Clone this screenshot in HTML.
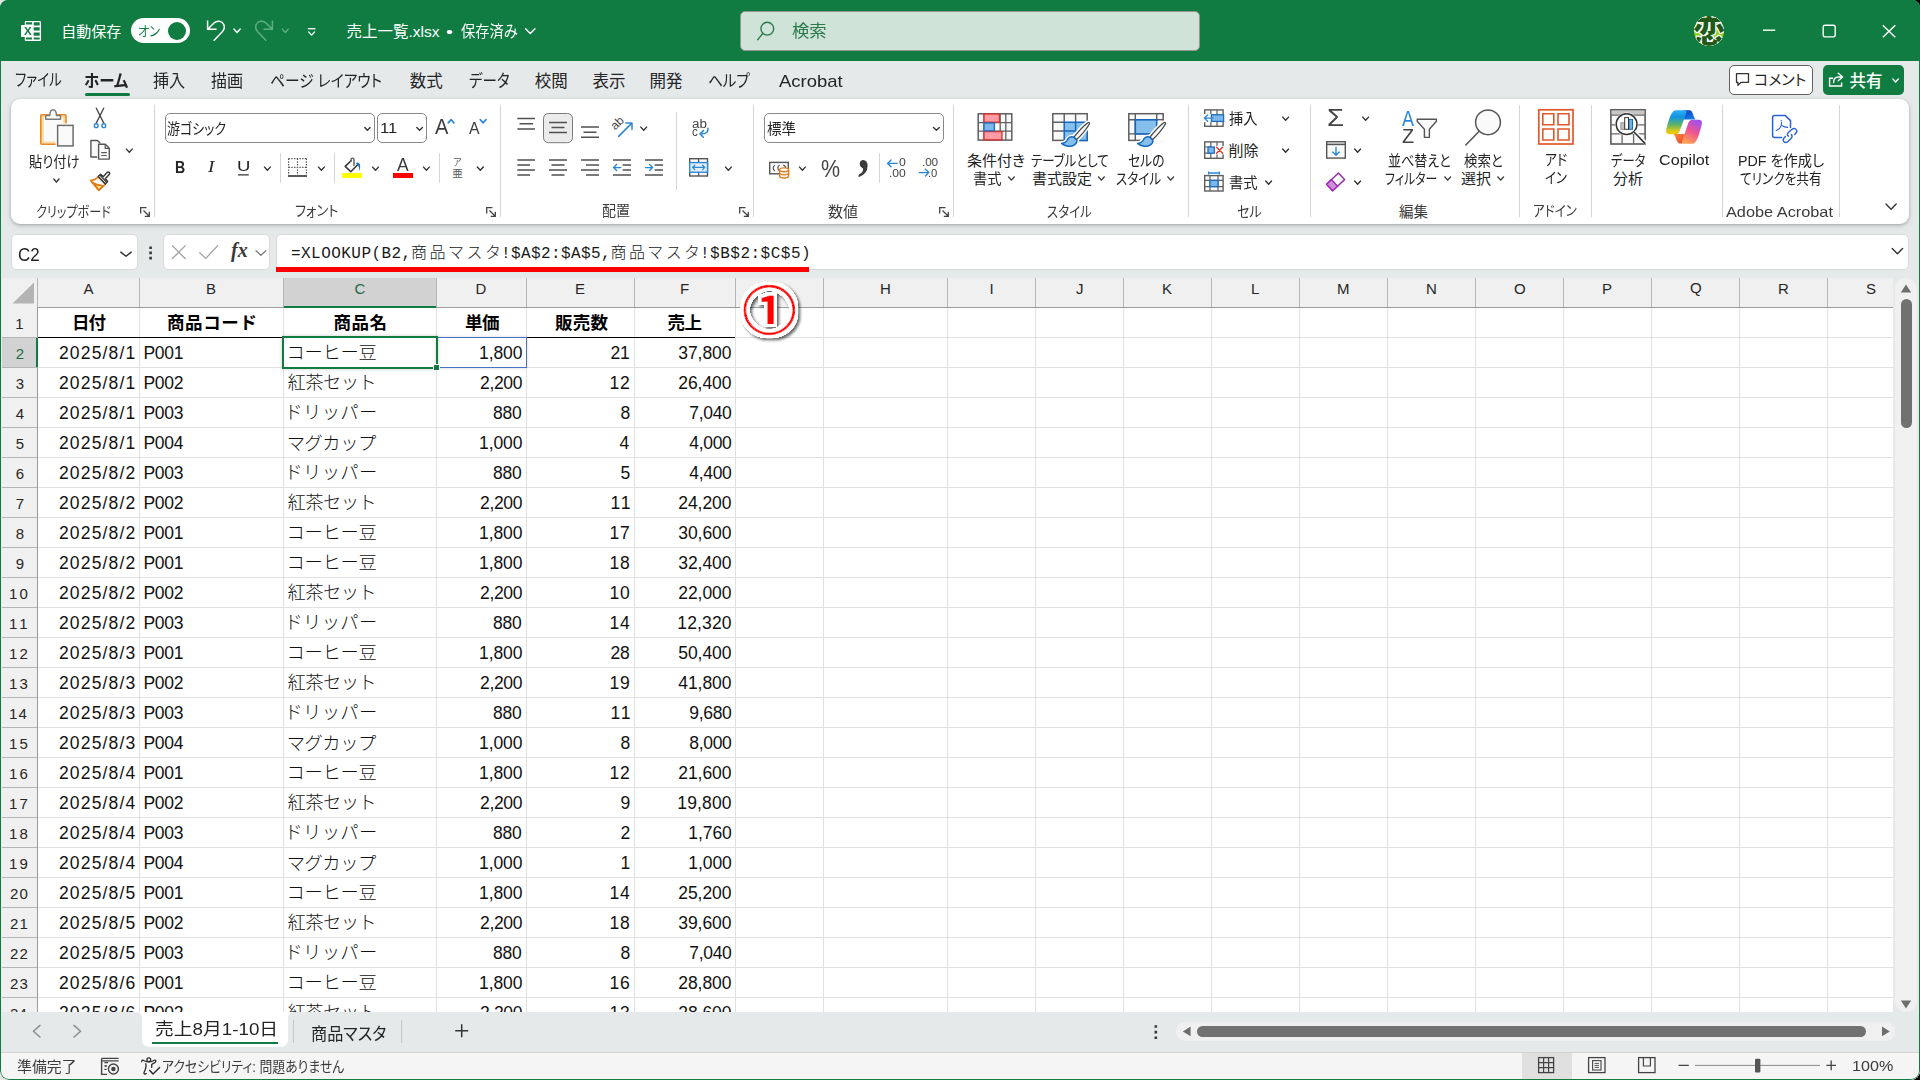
<!DOCTYPE html>
<html lang="ja"><head><meta charset="utf-8"><title>売上一覧.xlsx - Excel</title>
<style>
*{box-sizing:border-box;margin:0;padding:0}
html,body{width:1920px;height:1080px;overflow:hidden;background:linear-gradient(90deg,#E4E4E4 50%,#000 50%);font-family:"Liberation Sans","Noto Sans CJK JP",sans-serif;}
#win{position:absolute;left:0;top:0;width:1920px;height:1080px;overflow:hidden;background:#E5E9EA;border-radius:8px 8px 9px 9px;}
#frame{position:absolute;left:0;top:0;width:1920px;height:1080px;border:1px solid #107C41;border-left-width:1.3px;border-radius:8px 8px 9px 9px;}
.abs{position:absolute}
.t{position:absolute;white-space:pre;line-height:40px;height:40px;transform-origin:0 50%;}
#title{position:absolute;left:0;top:0;width:1920px;height:61px;background:#107C41;}
#search{position:absolute;left:740px;top:11px;width:460px;height:40px;background:#CFE3D8;border:1px solid #979393;border-radius:5px;}
#toggle{position:absolute;left:131px;top:18px;width:59px;height:25px;border-radius:13px;background:#fff;}
#knob{position:absolute;left:168px;top:22px;width:18px;height:18px;border-radius:9px;background:#107C41;}
#avatar{position:absolute;left:1694px;top:16px;width:30px;height:30px;border-radius:15px;background:#8FD11E;overflow:hidden;}
#homeul{position:absolute;left:85px;top:93px;width:45px;height:3px;border-radius:1.5px;background:#107C41;}
#cmt{position:absolute;left:1729px;top:65px;width:84px;height:30px;border:1px solid #616161;border-radius:5px;background:#fff;}
#share{position:absolute;left:1823px;top:65px;width:81px;height:30px;border-radius:5px;background:#107C41;}
#ribbon{position:absolute;left:11px;top:99px;width:1898px;height:125px;background:#fff;border-radius:9px;box-shadow:0 1px 3px rgba(0,0,0,.22),0 2px 6px rgba(0,0,0,.10);}
.vsep{position:absolute;width:1px;background:#D4D4D4;}
.box{position:absolute;border:1px solid #8A8A8A;border-radius:5px;background:#fff;}
.fbox{position:absolute;top:234px;height:36px;background:#fff;border:1px solid #D9D9D9;border-radius:5px;}
#grid{position:absolute;left:2px;top:278px;width:1891px;height:734px;background:#fff;overflow:hidden;}
#colhdr{position:absolute;left:0;top:0;width:1891px;height:30px;background:#F0F0F0;border-bottom:1px solid #9C9C9C;}
#rowhdr{position:absolute;left:0;top:0;width:36px;height:734px;background:#F0F0F0;border-right:1px solid #9C9C9C;}
.vl{position:absolute;top:30px;width:1px;height:704px;background:#E1E1E1;}
.hl{position:absolute;left:36px;height:1px;width:1855px;background:#E1E1E1;}
.chl{position:absolute;top:0;width:1px;height:29px;background:#B5B5B5;}
.rhl{position:absolute;left:0;width:35px;height:1px;background:#B5B5B5;}
#vscroll{position:absolute;left:1895px;top:278px;width:22px;height:734px;background:#F0F0F0;border-radius:11px;}
#vthumb{position:absolute;left:1901px;top:299px;width:11px;height:129px;border-radius:5.5px;background:#717171;}
#tabs{position:absolute;left:0;top:1012px;width:1920px;height:40px;background:#E5E9EA;}
#acttab{position:absolute;left:142px;top:1012px;width:146px;height:35px;background:#fff;border-radius:0 0 7px 7px;}
#acttabul{position:absolute;left:152px;top:1042px;width:126px;height:2px;background:#107C41;}
#hscroll{position:absolute;left:1176px;top:1022px;width:719px;height:19px;background:#F0F0F0;border-radius:9.5px;}
#hthumb{position:absolute;left:1197px;top:1026px;width:669px;height:11px;border-radius:5.5px;background:#717171;}
#status{position:absolute;left:0;top:1052px;width:1920px;height:28px;background:#F5F5F5;border-top:1px solid #D6D0D0;}
#viewsel{position:absolute;left:1522px;top:1053px;width:50px;height:26px;background:#E0E0E0;}
</style></head><body><div id="win">
<div id="title"></div>
<div id="search"></div><div id="toggle"></div><div id="knob"></div><div id="avatar"><span style="position:absolute;left:-1.5px;top:-8px;width:33px;text-align:center;font-size:33px;line-height:48px;font-weight:900;color:#215A18;text-shadow:-1px 0 #fff,1px 0 #fff,0 -1px #fff,0 1px #fff,-.8px -.8px #fff,.8px .8px #fff,.8px -.8px #fff,-.8px .8px #fff">恋</span></div>
<div id="homeul"></div><div id="cmt"></div><div id="share"></div>
<div id="ribbon"></div>
<div class="vsep" style="left:154.1px;top:105px;height:112px"></div>
<div class="vsep" style="left:500.0px;top:105px;height:112px"></div>
<div class="vsep" style="left:753.0px;top:105px;height:112px"></div>
<div class="vsep" style="left:952.9px;top:105px;height:112px"></div>
<div class="vsep" style="left:1187.9px;top:105px;height:112px"></div>
<div class="vsep" style="left:1309.9px;top:105px;height:112px"></div>
<div class="vsep" style="left:1518.9px;top:105px;height:112px"></div>
<div class="vsep" style="left:1591.0px;top:105px;height:112px"></div>
<div class="vsep" style="left:1722.0px;top:105px;height:112px"></div>
<div class="vsep" style="left:1839.0px;top:105px;height:112px"></div>
<div class="vsep" style="left:280.1px;top:153px;height:30px"></div>
<div class="vsep" style="left:334.1px;top:153px;height:30px"></div>
<div class="vsep" style="left:439.0px;top:153px;height:30px"></div>
<div class="vsep" style="left:879.0px;top:153px;height:30px"></div>
<div class="vsep" style="left:676px;top:112px;height:78px"></div>
<div class="box" style="left:165px;top:113px;width:210px;height:30px"></div>
<div class="box" style="left:377px;top:113px;width:50px;height:30px"></div>
<div class="box" style="left:764px;top:113px;width:180px;height:30px"></div>
<div class="fbox" style="left:11px;width:127px"></div><div class="fbox" style="left:163px;width:107px"></div><div class="fbox" style="left:276px;width:1633px"></div>
<div class="abs" style="left:276px;top:267px;width:532.5px;height:5px;background:#FF0000"></div>
<div id="grid">
<div class="vl" style="left:137px"></div>
<div class="vl" style="left:281px"></div>
<div class="vl" style="left:434px"></div>
<div class="vl" style="left:524px"></div>
<div class="vl" style="left:632px"></div>
<div class="vl" style="left:733px"></div>
<div class="vl" style="left:821px"></div>
<div class="vl" style="left:945px"></div>
<div class="vl" style="left:1033px"></div>
<div class="vl" style="left:1121px"></div>
<div class="vl" style="left:1209px"></div>
<div class="vl" style="left:1297px"></div>
<div class="vl" style="left:1385px"></div>
<div class="vl" style="left:1473px"></div>
<div class="vl" style="left:1561px"></div>
<div class="vl" style="left:1649px"></div>
<div class="vl" style="left:1737px"></div>
<div class="vl" style="left:1825px"></div>
<div class="hl" style="top:59px"></div>
<div class="hl" style="top:89px"></div>
<div class="hl" style="top:119px"></div>
<div class="hl" style="top:149px"></div>
<div class="hl" style="top:179px"></div>
<div class="hl" style="top:209px"></div>
<div class="hl" style="top:239px"></div>
<div class="hl" style="top:269px"></div>
<div class="hl" style="top:299px"></div>
<div class="hl" style="top:329px"></div>
<div class="hl" style="top:359px"></div>
<div class="hl" style="top:389px"></div>
<div class="hl" style="top:419px"></div>
<div class="hl" style="top:449px"></div>
<div class="hl" style="top:479px"></div>
<div class="hl" style="top:509px"></div>
<div class="hl" style="top:539px"></div>
<div class="hl" style="top:569px"></div>
<div class="hl" style="top:599px"></div>
<div class="hl" style="top:629px"></div>
<div class="hl" style="top:659px"></div>
<div class="hl" style="top:689px"></div>
<div class="hl" style="top:719px"></div>
<div class="hl" style="top:749px"></div>
<div class="hl" style="top:779px"></div>
<div class="abs" style="left:36px;top:59px;width:697px;height:1px;background:#000"></div>
<div class="abs" style="left:434px;top:59px;width:91px;height:31px;border:1px solid #4A72C9;box-shadow:0 0 3px rgba(0,0,0,.18)"></div>
<div class="abs" style="left:280px;top:58px;width:156px;height:33px;border:2px solid #107C41;box-shadow:0 0 4px rgba(0,0,0,.2)"></div>
<div class="abs" style="left:431px;top:86px;width:7px;height:7px;background:#107C41;border:1px solid #fff"></div>
<div id="colhdr"></div><div id="rowhdr"></div>
<div class="abs" style="left:282px;top:0;width:152px;height:30px;background:#D2D2D2;border-bottom:2px solid #107C41"></div>
<div class="abs" style="left:0;top:60px;width:36px;height:29px;background:#D2D2D2;border-right:2px solid #107C41"></div>
<div class="chl" style="left:35px"></div>
<div class="chl" style="left:137px"></div>
<div class="chl" style="left:281px"></div>
<div class="chl" style="left:434px"></div>
<div class="chl" style="left:524px"></div>
<div class="chl" style="left:632px"></div>
<div class="chl" style="left:733px"></div>
<div class="chl" style="left:821px"></div>
<div class="chl" style="left:945px"></div>
<div class="chl" style="left:1033px"></div>
<div class="chl" style="left:1121px"></div>
<div class="chl" style="left:1209px"></div>
<div class="chl" style="left:1297px"></div>
<div class="chl" style="left:1385px"></div>
<div class="chl" style="left:1473px"></div>
<div class="chl" style="left:1561px"></div>
<div class="chl" style="left:1649px"></div>
<div class="chl" style="left:1737px"></div>
<div class="chl" style="left:1825px"></div>
<div class="rhl" style="top:59px"></div>
<div class="rhl" style="top:89px"></div>
<div class="rhl" style="top:119px"></div>
<div class="rhl" style="top:149px"></div>
<div class="rhl" style="top:179px"></div>
<div class="rhl" style="top:209px"></div>
<div class="rhl" style="top:239px"></div>
<div class="rhl" style="top:269px"></div>
<div class="rhl" style="top:299px"></div>
<div class="rhl" style="top:329px"></div>
<div class="rhl" style="top:359px"></div>
<div class="rhl" style="top:389px"></div>
<div class="rhl" style="top:419px"></div>
<div class="rhl" style="top:449px"></div>
<div class="rhl" style="top:479px"></div>
<div class="rhl" style="top:509px"></div>
<div class="rhl" style="top:539px"></div>
<div class="rhl" style="top:569px"></div>
<div class="rhl" style="top:599px"></div>
<div class="rhl" style="top:629px"></div>
<div class="rhl" style="top:659px"></div>
<div class="rhl" style="top:689px"></div>
<div class="rhl" style="top:719px"></div>
<div class="rhl" style="top:749px"></div>
<svg class="abs" style="left:0;top:0" width="37" height="30"><path d="M32 4.5V25.5H10.5Z" fill="#B4B4B4"/></svg>
<span class="t" style="left:81.50px;top:-9.00px;color:#262626;font-family:'Liberation Sans','Noto Sans CJK JP',sans-serif;font-size:15px;font-weight:400;">A</span>
<span class="t" style="left:204.00px;top:-9.00px;color:#262626;font-family:'Liberation Sans','Noto Sans CJK JP',sans-serif;font-size:15px;font-weight:400;">B</span>
<span class="t" style="left:352.50px;top:-9.00px;color:#1E6B41;font-family:'Liberation Sans','Noto Sans CJK JP',sans-serif;font-size:15px;font-weight:400;">C</span>
<span class="t" style="left:473.50px;top:-9.00px;color:#262626;font-family:'Liberation Sans','Noto Sans CJK JP',sans-serif;font-size:15px;font-weight:400;">D</span>
<span class="t" style="left:573.00px;top:-9.00px;color:#262626;font-family:'Liberation Sans','Noto Sans CJK JP',sans-serif;font-size:15px;font-weight:400;">E</span>
<span class="t" style="left:678.00px;top:-9.00px;color:#262626;font-family:'Liberation Sans','Noto Sans CJK JP',sans-serif;font-size:15px;font-weight:400;">F</span>
<span class="t" style="left:772.00px;top:-9.00px;color:#262626;font-family:'Liberation Sans','Noto Sans CJK JP',sans-serif;font-size:15px;font-weight:400;">G</span>
<span class="t" style="left:878.00px;top:-9.00px;color:#262626;font-family:'Liberation Sans','Noto Sans CJK JP',sans-serif;font-size:15px;font-weight:400;">H</span>
<span class="t" style="left:987.50px;top:-9.00px;color:#262626;font-family:'Liberation Sans','Noto Sans CJK JP',sans-serif;font-size:15px;font-weight:400;">I</span>
<span class="t" style="left:1074.00px;top:-9.00px;color:#262626;font-family:'Liberation Sans','Noto Sans CJK JP',sans-serif;font-size:15px;font-weight:400;">J</span>
<span class="t" style="left:1160.00px;top:-9.00px;color:#262626;font-family:'Liberation Sans','Noto Sans CJK JP',sans-serif;font-size:15px;font-weight:400;">K</span>
<span class="t" style="left:1249.00px;top:-9.00px;color:#262626;font-family:'Liberation Sans','Noto Sans CJK JP',sans-serif;font-size:15px;font-weight:400;">L</span>
<span class="t" style="left:1335.00px;top:-9.00px;color:#262626;font-family:'Liberation Sans','Noto Sans CJK JP',sans-serif;font-size:15px;font-weight:400;">M</span>
<span class="t" style="left:1424.00px;top:-9.00px;color:#262626;font-family:'Liberation Sans','Noto Sans CJK JP',sans-serif;font-size:15px;font-weight:400;">N</span>
<span class="t" style="left:1512.00px;top:-9.00px;color:#262626;font-family:'Liberation Sans','Noto Sans CJK JP',sans-serif;font-size:15px;font-weight:400;">O</span>
<span class="t" style="left:1600.00px;top:-9.00px;color:#262626;font-family:'Liberation Sans','Noto Sans CJK JP',sans-serif;font-size:15px;font-weight:400;">P</span>
<span class="t" style="left:1688.00px;top:-10.50px;color:#262626;font-family:'Liberation Sans','Noto Sans CJK JP',sans-serif;font-size:15px;font-weight:400;">Q</span>
<span class="t" style="left:1776.00px;top:-9.00px;color:#262626;font-family:'Liberation Sans','Noto Sans CJK JP',sans-serif;font-size:15px;font-weight:400;">R</span>
<span class="t" style="left:1864.00px;top:-9.00px;color:#262626;font-family:'Liberation Sans','Noto Sans CJK JP',sans-serif;font-size:15px;font-weight:400;">S</span>
<span class="t" style="left:13.20px;top:25.60px;color:#262626;font-family:'Liberation Sans','Noto Sans CJK JP',sans-serif;font-size:15px;font-weight:400;">1</span>
<span class="t" style="left:13.70px;top:55.60px;color:#1E6B41;font-family:'Liberation Sans','Noto Sans CJK JP',sans-serif;font-size:15px;font-weight:400;">2</span>
<span class="t" style="left:13.70px;top:85.60px;color:#262626;font-family:'Liberation Sans','Noto Sans CJK JP',sans-serif;font-size:15px;font-weight:400;">3</span>
<span class="t" style="left:13.70px;top:115.60px;color:#262626;font-family:'Liberation Sans','Noto Sans CJK JP',sans-serif;font-size:15px;font-weight:400;">4</span>
<span class="t" style="left:13.70px;top:145.60px;color:#262626;font-family:'Liberation Sans','Noto Sans CJK JP',sans-serif;font-size:15px;font-weight:400;">5</span>
<span class="t" style="left:13.70px;top:175.60px;color:#262626;font-family:'Liberation Sans','Noto Sans CJK JP',sans-serif;font-size:15px;font-weight:400;">6</span>
<span class="t" style="left:13.70px;top:205.60px;color:#262626;font-family:'Liberation Sans','Noto Sans CJK JP',sans-serif;font-size:15px;font-weight:400;">7</span>
<span class="t" style="left:13.70px;top:235.60px;color:#262626;font-family:'Liberation Sans','Noto Sans CJK JP',sans-serif;font-size:15px;font-weight:400;">8</span>
<span class="t" style="left:13.70px;top:265.60px;color:#262626;font-family:'Liberation Sans','Noto Sans CJK JP',sans-serif;font-size:15px;font-weight:400;">9</span>
<span class="t" style="left:7.10px;top:295.60px;color:#262626;font-family:'Liberation Sans','Noto Sans CJK JP',sans-serif;font-size:15px;font-weight:400;letter-spacing:2.000px;">10</span>
<span class="t" style="left:7.10px;top:325.60px;color:#262626;font-family:'Liberation Sans','Noto Sans CJK JP',sans-serif;font-size:15px;font-weight:400;letter-spacing:3.000px;">11</span>
<span class="t" style="left:7.10px;top:355.60px;color:#262626;font-family:'Liberation Sans','Noto Sans CJK JP',sans-serif;font-size:15px;font-weight:400;letter-spacing:2.000px;">12</span>
<span class="t" style="left:7.10px;top:385.60px;color:#262626;font-family:'Liberation Sans','Noto Sans CJK JP',sans-serif;font-size:15px;font-weight:400;letter-spacing:2.000px;">13</span>
<span class="t" style="left:7.10px;top:415.60px;color:#262626;font-family:'Liberation Sans','Noto Sans CJK JP',sans-serif;font-size:15px;font-weight:400;letter-spacing:1.000px;">14</span>
<span class="t" style="left:7.10px;top:445.60px;color:#262626;font-family:'Liberation Sans','Noto Sans CJK JP',sans-serif;font-size:15px;font-weight:400;letter-spacing:2.000px;">15</span>
<span class="t" style="left:7.10px;top:475.60px;color:#262626;font-family:'Liberation Sans','Noto Sans CJK JP',sans-serif;font-size:15px;font-weight:400;letter-spacing:2.000px;">16</span>
<span class="t" style="left:7.10px;top:505.60px;color:#262626;font-family:'Liberation Sans','Noto Sans CJK JP',sans-serif;font-size:15px;font-weight:400;letter-spacing:2.000px;">17</span>
<span class="t" style="left:7.10px;top:535.60px;color:#262626;font-family:'Liberation Sans','Noto Sans CJK JP',sans-serif;font-size:15px;font-weight:400;letter-spacing:2.000px;">18</span>
<span class="t" style="left:7.10px;top:565.60px;color:#262626;font-family:'Liberation Sans','Noto Sans CJK JP',sans-serif;font-size:15px;font-weight:400;letter-spacing:2.000px;">19</span>
<span class="t" style="left:8.10px;top:595.60px;color:#262626;font-family:'Liberation Sans','Noto Sans CJK JP',sans-serif;font-size:15px;font-weight:400;letter-spacing:1.000px;">20</span>
<span class="t" style="left:8.10px;top:625.60px;color:#262626;font-family:'Liberation Sans','Noto Sans CJK JP',sans-serif;font-size:15px;font-weight:400;letter-spacing:1.000px;">21</span>
<span class="t" style="left:8.10px;top:655.60px;color:#262626;font-family:'Liberation Sans','Noto Sans CJK JP',sans-serif;font-size:15px;font-weight:400;letter-spacing:1.000px;">22</span>
<span class="t" style="left:8.10px;top:685.60px;color:#262626;font-family:'Liberation Sans','Noto Sans CJK JP',sans-serif;font-size:15px;font-weight:400;letter-spacing:1.000px;">23</span>
<span class="t" style="left:8.10px;top:715.60px;color:#262626;font-family:'Liberation Sans','Noto Sans CJK JP',sans-serif;font-size:15px;font-weight:400;">24</span>
<span class="t" style="left:70.00px;top:25.00px;color:#000;font-family:'Liberation Sans','Noto Sans CJK JP',sans-serif;font-size:17.5px;font-weight:700;letter-spacing:-1.000px;">日付</span>
<span class="t" style="left:165.00px;top:25.00px;color:#000;font-family:'Liberation Sans','Noto Sans CJK JP',sans-serif;font-size:17.5px;font-weight:700;letter-spacing:0.625px;">商品コード</span>
<span class="t" style="left:331.50px;top:25.00px;color:#000;font-family:'Liberation Sans','Noto Sans CJK JP',sans-serif;font-size:17.5px;font-weight:700;letter-spacing:0.500px;">商品名</span>
<span class="t" style="left:463.00px;top:25.00px;color:#000;font-family:'Liberation Sans','Noto Sans CJK JP',sans-serif;font-size:17.5px;font-weight:700;letter-spacing:-0.500px;">単価</span>
<span class="t" style="left:553.00px;top:25.00px;color:#000;font-family:'Liberation Sans','Noto Sans CJK JP',sans-serif;font-size:17.5px;font-weight:700;letter-spacing:0.250px;">販売数</span>
<span class="t" style="left:665.50px;top:25.00px;color:#000;font-family:'Liberation Sans','Noto Sans CJK JP',sans-serif;font-size:17.5px;font-weight:700;letter-spacing:-0.500px;">売上</span>
<span class="t" style="left:56.90px;top:55.00px;color:#111;font-family:'Liberation Sans','Noto Sans CJK JP',sans-serif;font-size:17.5px;font-weight:400;letter-spacing:1.186px;">2025/8/1</span>
<span class="t" style="left:141.40px;top:55.00px;color:#111;font-family:'Liberation Sans','Noto Sans CJK JP',sans-serif;font-size:17.5px;font-weight:400;letter-spacing:-0.300px;">P001</span>
<span class="t" style="left:284.50px;top:54.50px;color:#111;font-family:'Liberation Sans','Noto Sans CJK JP',sans-serif;font-size:18.3px;font-weight:300;letter-spacing:-0.300px;">コーヒー豆</span>
<span class="t" style="left:477.00px;top:55.00px;color:#111;font-family:'Liberation Sans','Noto Sans CJK JP',sans-serif;font-size:17.5px;font-weight:400;letter-spacing:-0.075px;">1,800</span>
<span class="t" style="left:608.60px;top:55.00px;color:#111;font-family:'Liberation Sans','Noto Sans CJK JP',sans-serif;font-size:17.5px;font-weight:400;letter-spacing:-0.400px;">21</span>
<span class="t" style="left:676.30px;top:55.00px;color:#111;font-family:'Liberation Sans','Noto Sans CJK JP',sans-serif;font-size:17.5px;font-weight:400;letter-spacing:-0.070px;">37,800</span>
<span class="t" style="left:56.90px;top:85.00px;color:#111;font-family:'Liberation Sans','Noto Sans CJK JP',sans-serif;font-size:17.5px;font-weight:400;letter-spacing:1.186px;">2025/8/1</span>
<span class="t" style="left:141.40px;top:85.00px;color:#111;font-family:'Liberation Sans','Noto Sans CJK JP',sans-serif;font-size:17.5px;font-weight:400;letter-spacing:-0.300px;">P002</span>
<span class="t" style="left:285.60px;top:85.00px;color:#111;font-family:'Liberation Sans','Noto Sans CJK JP',sans-serif;font-size:18.3px;font-weight:300;letter-spacing:-0.600px;">紅茶セット</span>
<span class="t" style="left:478.00px;top:85.00px;color:#111;font-family:'Liberation Sans','Noto Sans CJK JP',sans-serif;font-size:17.5px;font-weight:400;letter-spacing:-0.325px;">2,200</span>
<span class="t" style="left:607.60px;top:85.00px;color:#111;font-family:'Liberation Sans','Noto Sans CJK JP',sans-serif;font-size:17.5px;font-weight:400;letter-spacing:0.600px;">12</span>
<span class="t" style="left:676.30px;top:85.00px;color:#111;font-family:'Liberation Sans','Noto Sans CJK JP',sans-serif;font-size:17.5px;font-weight:400;letter-spacing:-0.070px;">26,400</span>
<span class="t" style="left:56.90px;top:115.00px;color:#111;font-family:'Liberation Sans','Noto Sans CJK JP',sans-serif;font-size:17.5px;font-weight:400;letter-spacing:1.186px;">2025/8/1</span>
<span class="t" style="left:141.40px;top:115.00px;color:#111;font-family:'Liberation Sans','Noto Sans CJK JP',sans-serif;font-size:17.5px;font-weight:400;letter-spacing:-0.300px;">P003</span>
<span class="t" style="left:282.50px;top:115.00px;color:#111;font-family:'Liberation Sans','Noto Sans CJK JP',sans-serif;font-size:18.3px;font-weight:300;letter-spacing:0.325px;">ドリッパー</span>
<span class="t" style="left:491.00px;top:115.00px;color:#111;font-family:'Liberation Sans','Noto Sans CJK JP',sans-serif;font-size:17.5px;font-weight:400;letter-spacing:-0.225px;">880</span>
<span class="t" style="left:618.60px;top:115.00px;color:#111;font-family:'Liberation Sans','Noto Sans CJK JP',sans-serif;font-size:17.5px;font-weight:400;">8</span>
<span class="t" style="left:687.30px;top:115.00px;color:#111;font-family:'Liberation Sans','Noto Sans CJK JP',sans-serif;font-size:17.5px;font-weight:400;letter-spacing:-0.325px;">7,040</span>
<span class="t" style="left:56.90px;top:145.00px;color:#111;font-family:'Liberation Sans','Noto Sans CJK JP',sans-serif;font-size:17.5px;font-weight:400;letter-spacing:1.186px;">2025/8/1</span>
<span class="t" style="left:141.40px;top:145.00px;color:#111;font-family:'Liberation Sans','Noto Sans CJK JP',sans-serif;font-size:17.5px;font-weight:400;letter-spacing:-0.300px;">P004</span>
<span class="t" style="left:284.80px;top:145.50px;color:#111;font-family:'Liberation Sans','Noto Sans CJK JP',sans-serif;font-size:18.3px;font-weight:300;letter-spacing:-0.500px;">マグカップ</span>
<span class="t" style="left:477.00px;top:145.00px;color:#111;font-family:'Liberation Sans','Noto Sans CJK JP',sans-serif;font-size:17.5px;font-weight:400;letter-spacing:-0.075px;">1,000</span>
<span class="t" style="left:617.60px;top:145.00px;color:#111;font-family:'Liberation Sans','Noto Sans CJK JP',sans-serif;font-size:17.5px;font-weight:400;">4</span>
<span class="t" style="left:687.30px;top:145.00px;color:#111;font-family:'Liberation Sans','Noto Sans CJK JP',sans-serif;font-size:17.5px;font-weight:400;letter-spacing:-0.325px;">4,000</span>
<span class="t" style="left:56.90px;top:175.00px;color:#111;font-family:'Liberation Sans','Noto Sans CJK JP',sans-serif;font-size:17.5px;font-weight:400;letter-spacing:1.186px;">2025/8/2</span>
<span class="t" style="left:141.40px;top:175.00px;color:#111;font-family:'Liberation Sans','Noto Sans CJK JP',sans-serif;font-size:17.5px;font-weight:400;letter-spacing:-0.300px;">P003</span>
<span class="t" style="left:282.50px;top:175.00px;color:#111;font-family:'Liberation Sans','Noto Sans CJK JP',sans-serif;font-size:18.3px;font-weight:300;letter-spacing:0.325px;">ドリッパー</span>
<span class="t" style="left:491.00px;top:175.00px;color:#111;font-family:'Liberation Sans','Noto Sans CJK JP',sans-serif;font-size:17.5px;font-weight:400;letter-spacing:-0.225px;">880</span>
<span class="t" style="left:618.60px;top:175.00px;color:#111;font-family:'Liberation Sans','Noto Sans CJK JP',sans-serif;font-size:17.5px;font-weight:400;">5</span>
<span class="t" style="left:687.30px;top:175.00px;color:#111;font-family:'Liberation Sans','Noto Sans CJK JP',sans-serif;font-size:17.5px;font-weight:400;letter-spacing:-0.325px;">4,400</span>
<span class="t" style="left:56.90px;top:205.00px;color:#111;font-family:'Liberation Sans','Noto Sans CJK JP',sans-serif;font-size:17.5px;font-weight:400;letter-spacing:1.186px;">2025/8/2</span>
<span class="t" style="left:141.40px;top:205.00px;color:#111;font-family:'Liberation Sans','Noto Sans CJK JP',sans-serif;font-size:17.5px;font-weight:400;letter-spacing:-0.300px;">P002</span>
<span class="t" style="left:285.60px;top:205.00px;color:#111;font-family:'Liberation Sans','Noto Sans CJK JP',sans-serif;font-size:18.3px;font-weight:300;letter-spacing:-0.600px;">紅茶セット</span>
<span class="t" style="left:478.00px;top:205.00px;color:#111;font-family:'Liberation Sans','Noto Sans CJK JP',sans-serif;font-size:17.5px;font-weight:400;letter-spacing:-0.325px;">2,200</span>
<span class="t" style="left:608.60px;top:205.00px;color:#111;font-family:'Liberation Sans','Noto Sans CJK JP',sans-serif;font-size:17.5px;font-weight:400;letter-spacing:1.600px;">11</span>
<span class="t" style="left:676.30px;top:205.00px;color:#111;font-family:'Liberation Sans','Noto Sans CJK JP',sans-serif;font-size:17.5px;font-weight:400;letter-spacing:-0.070px;">24,200</span>
<span class="t" style="left:56.90px;top:235.00px;color:#111;font-family:'Liberation Sans','Noto Sans CJK JP',sans-serif;font-size:17.5px;font-weight:400;letter-spacing:1.186px;">2025/8/2</span>
<span class="t" style="left:141.40px;top:235.00px;color:#111;font-family:'Liberation Sans','Noto Sans CJK JP',sans-serif;font-size:17.5px;font-weight:400;letter-spacing:-0.300px;">P001</span>
<span class="t" style="left:284.50px;top:234.50px;color:#111;font-family:'Liberation Sans','Noto Sans CJK JP',sans-serif;font-size:18.3px;font-weight:300;letter-spacing:-0.300px;">コーヒー豆</span>
<span class="t" style="left:477.00px;top:235.00px;color:#111;font-family:'Liberation Sans','Noto Sans CJK JP',sans-serif;font-size:17.5px;font-weight:400;letter-spacing:-0.075px;">1,800</span>
<span class="t" style="left:607.60px;top:235.00px;color:#111;font-family:'Liberation Sans','Noto Sans CJK JP',sans-serif;font-size:17.5px;font-weight:400;letter-spacing:0.600px;">17</span>
<span class="t" style="left:676.30px;top:235.00px;color:#111;font-family:'Liberation Sans','Noto Sans CJK JP',sans-serif;font-size:17.5px;font-weight:400;letter-spacing:-0.070px;">30,600</span>
<span class="t" style="left:56.90px;top:265.00px;color:#111;font-family:'Liberation Sans','Noto Sans CJK JP',sans-serif;font-size:17.5px;font-weight:400;letter-spacing:1.186px;">2025/8/2</span>
<span class="t" style="left:141.40px;top:265.00px;color:#111;font-family:'Liberation Sans','Noto Sans CJK JP',sans-serif;font-size:17.5px;font-weight:400;letter-spacing:-0.300px;">P001</span>
<span class="t" style="left:284.50px;top:264.50px;color:#111;font-family:'Liberation Sans','Noto Sans CJK JP',sans-serif;font-size:18.3px;font-weight:300;letter-spacing:-0.300px;">コーヒー豆</span>
<span class="t" style="left:477.00px;top:265.00px;color:#111;font-family:'Liberation Sans','Noto Sans CJK JP',sans-serif;font-size:17.5px;font-weight:400;letter-spacing:-0.075px;">1,800</span>
<span class="t" style="left:607.60px;top:265.00px;color:#111;font-family:'Liberation Sans','Noto Sans CJK JP',sans-serif;font-size:17.5px;font-weight:400;letter-spacing:0.600px;">18</span>
<span class="t" style="left:676.30px;top:265.00px;color:#111;font-family:'Liberation Sans','Noto Sans CJK JP',sans-serif;font-size:17.5px;font-weight:400;letter-spacing:-0.070px;">32,400</span>
<span class="t" style="left:56.90px;top:295.00px;color:#111;font-family:'Liberation Sans','Noto Sans CJK JP',sans-serif;font-size:17.5px;font-weight:400;letter-spacing:1.186px;">2025/8/2</span>
<span class="t" style="left:141.40px;top:295.00px;color:#111;font-family:'Liberation Sans','Noto Sans CJK JP',sans-serif;font-size:17.5px;font-weight:400;letter-spacing:-0.300px;">P002</span>
<span class="t" style="left:285.60px;top:295.00px;color:#111;font-family:'Liberation Sans','Noto Sans CJK JP',sans-serif;font-size:18.3px;font-weight:300;letter-spacing:-0.600px;">紅茶セット</span>
<span class="t" style="left:478.00px;top:295.00px;color:#111;font-family:'Liberation Sans','Noto Sans CJK JP',sans-serif;font-size:17.5px;font-weight:400;letter-spacing:-0.325px;">2,200</span>
<span class="t" style="left:607.60px;top:295.00px;color:#111;font-family:'Liberation Sans','Noto Sans CJK JP',sans-serif;font-size:17.5px;font-weight:400;letter-spacing:0.600px;">10</span>
<span class="t" style="left:676.30px;top:295.00px;color:#111;font-family:'Liberation Sans','Noto Sans CJK JP',sans-serif;font-size:17.5px;font-weight:400;letter-spacing:-0.070px;">22,000</span>
<span class="t" style="left:56.90px;top:325.00px;color:#111;font-family:'Liberation Sans','Noto Sans CJK JP',sans-serif;font-size:17.5px;font-weight:400;letter-spacing:1.186px;">2025/8/2</span>
<span class="t" style="left:141.40px;top:325.00px;color:#111;font-family:'Liberation Sans','Noto Sans CJK JP',sans-serif;font-size:17.5px;font-weight:400;letter-spacing:-0.300px;">P003</span>
<span class="t" style="left:282.50px;top:325.00px;color:#111;font-family:'Liberation Sans','Noto Sans CJK JP',sans-serif;font-size:18.3px;font-weight:300;letter-spacing:0.325px;">ドリッパー</span>
<span class="t" style="left:491.00px;top:325.00px;color:#111;font-family:'Liberation Sans','Noto Sans CJK JP',sans-serif;font-size:17.5px;font-weight:400;letter-spacing:-0.225px;">880</span>
<span class="t" style="left:607.60px;top:325.00px;color:#111;font-family:'Liberation Sans','Noto Sans CJK JP',sans-serif;font-size:17.5px;font-weight:400;letter-spacing:0.600px;">14</span>
<span class="t" style="left:675.30px;top:325.00px;color:#111;font-family:'Liberation Sans','Noto Sans CJK JP',sans-serif;font-size:17.5px;font-weight:400;letter-spacing:0.130px;">12,320</span>
<span class="t" style="left:56.90px;top:355.00px;color:#111;font-family:'Liberation Sans','Noto Sans CJK JP',sans-serif;font-size:17.5px;font-weight:400;letter-spacing:1.186px;">2025/8/3</span>
<span class="t" style="left:141.40px;top:355.00px;color:#111;font-family:'Liberation Sans','Noto Sans CJK JP',sans-serif;font-size:17.5px;font-weight:400;letter-spacing:-0.300px;">P001</span>
<span class="t" style="left:284.50px;top:354.50px;color:#111;font-family:'Liberation Sans','Noto Sans CJK JP',sans-serif;font-size:18.3px;font-weight:300;letter-spacing:-0.300px;">コーヒー豆</span>
<span class="t" style="left:477.00px;top:355.00px;color:#111;font-family:'Liberation Sans','Noto Sans CJK JP',sans-serif;font-size:17.5px;font-weight:400;letter-spacing:-0.075px;">1,800</span>
<span class="t" style="left:608.60px;top:355.00px;color:#111;font-family:'Liberation Sans','Noto Sans CJK JP',sans-serif;font-size:17.5px;font-weight:400;letter-spacing:-0.400px;">28</span>
<span class="t" style="left:676.30px;top:355.00px;color:#111;font-family:'Liberation Sans','Noto Sans CJK JP',sans-serif;font-size:17.5px;font-weight:400;letter-spacing:-0.070px;">50,400</span>
<span class="t" style="left:56.90px;top:385.00px;color:#111;font-family:'Liberation Sans','Noto Sans CJK JP',sans-serif;font-size:17.5px;font-weight:400;letter-spacing:1.186px;">2025/8/3</span>
<span class="t" style="left:141.40px;top:385.00px;color:#111;font-family:'Liberation Sans','Noto Sans CJK JP',sans-serif;font-size:17.5px;font-weight:400;letter-spacing:-0.300px;">P002</span>
<span class="t" style="left:285.60px;top:385.00px;color:#111;font-family:'Liberation Sans','Noto Sans CJK JP',sans-serif;font-size:18.3px;font-weight:300;letter-spacing:-0.600px;">紅茶セット</span>
<span class="t" style="left:478.00px;top:385.00px;color:#111;font-family:'Liberation Sans','Noto Sans CJK JP',sans-serif;font-size:17.5px;font-weight:400;letter-spacing:-0.325px;">2,200</span>
<span class="t" style="left:607.60px;top:385.00px;color:#111;font-family:'Liberation Sans','Noto Sans CJK JP',sans-serif;font-size:17.5px;font-weight:400;letter-spacing:0.600px;">19</span>
<span class="t" style="left:676.30px;top:385.00px;color:#111;font-family:'Liberation Sans','Noto Sans CJK JP',sans-serif;font-size:17.5px;font-weight:400;letter-spacing:-0.070px;">41,800</span>
<span class="t" style="left:56.90px;top:415.00px;color:#111;font-family:'Liberation Sans','Noto Sans CJK JP',sans-serif;font-size:17.5px;font-weight:400;letter-spacing:1.186px;">2025/8/3</span>
<span class="t" style="left:141.40px;top:415.00px;color:#111;font-family:'Liberation Sans','Noto Sans CJK JP',sans-serif;font-size:17.5px;font-weight:400;letter-spacing:-0.300px;">P003</span>
<span class="t" style="left:282.50px;top:415.00px;color:#111;font-family:'Liberation Sans','Noto Sans CJK JP',sans-serif;font-size:18.3px;font-weight:300;letter-spacing:0.325px;">ドリッパー</span>
<span class="t" style="left:491.00px;top:415.00px;color:#111;font-family:'Liberation Sans','Noto Sans CJK JP',sans-serif;font-size:17.5px;font-weight:400;letter-spacing:-0.225px;">880</span>
<span class="t" style="left:608.60px;top:415.00px;color:#111;font-family:'Liberation Sans','Noto Sans CJK JP',sans-serif;font-size:17.5px;font-weight:400;letter-spacing:1.600px;">11</span>
<span class="t" style="left:687.30px;top:415.00px;color:#111;font-family:'Liberation Sans','Noto Sans CJK JP',sans-serif;font-size:17.5px;font-weight:400;letter-spacing:-0.325px;">9,680</span>
<span class="t" style="left:56.90px;top:445.00px;color:#111;font-family:'Liberation Sans','Noto Sans CJK JP',sans-serif;font-size:17.5px;font-weight:400;letter-spacing:1.186px;">2025/8/3</span>
<span class="t" style="left:141.40px;top:445.00px;color:#111;font-family:'Liberation Sans','Noto Sans CJK JP',sans-serif;font-size:17.5px;font-weight:400;letter-spacing:-0.300px;">P004</span>
<span class="t" style="left:284.80px;top:445.50px;color:#111;font-family:'Liberation Sans','Noto Sans CJK JP',sans-serif;font-size:18.3px;font-weight:300;letter-spacing:-0.500px;">マグカップ</span>
<span class="t" style="left:477.00px;top:445.00px;color:#111;font-family:'Liberation Sans','Noto Sans CJK JP',sans-serif;font-size:17.5px;font-weight:400;letter-spacing:-0.075px;">1,000</span>
<span class="t" style="left:618.60px;top:445.00px;color:#111;font-family:'Liberation Sans','Noto Sans CJK JP',sans-serif;font-size:17.5px;font-weight:400;">8</span>
<span class="t" style="left:687.30px;top:445.00px;color:#111;font-family:'Liberation Sans','Noto Sans CJK JP',sans-serif;font-size:17.5px;font-weight:400;letter-spacing:-0.325px;">8,000</span>
<span class="t" style="left:56.90px;top:475.00px;color:#111;font-family:'Liberation Sans','Noto Sans CJK JP',sans-serif;font-size:17.5px;font-weight:400;letter-spacing:1.186px;">2025/8/4</span>
<span class="t" style="left:141.40px;top:475.00px;color:#111;font-family:'Liberation Sans','Noto Sans CJK JP',sans-serif;font-size:17.5px;font-weight:400;letter-spacing:-0.300px;">P001</span>
<span class="t" style="left:284.50px;top:474.50px;color:#111;font-family:'Liberation Sans','Noto Sans CJK JP',sans-serif;font-size:18.3px;font-weight:300;letter-spacing:-0.300px;">コーヒー豆</span>
<span class="t" style="left:477.00px;top:475.00px;color:#111;font-family:'Liberation Sans','Noto Sans CJK JP',sans-serif;font-size:17.5px;font-weight:400;letter-spacing:-0.075px;">1,800</span>
<span class="t" style="left:607.60px;top:475.00px;color:#111;font-family:'Liberation Sans','Noto Sans CJK JP',sans-serif;font-size:17.5px;font-weight:400;letter-spacing:0.600px;">12</span>
<span class="t" style="left:676.30px;top:475.00px;color:#111;font-family:'Liberation Sans','Noto Sans CJK JP',sans-serif;font-size:17.5px;font-weight:400;letter-spacing:-0.070px;">21,600</span>
<span class="t" style="left:56.90px;top:505.00px;color:#111;font-family:'Liberation Sans','Noto Sans CJK JP',sans-serif;font-size:17.5px;font-weight:400;letter-spacing:1.186px;">2025/8/4</span>
<span class="t" style="left:141.40px;top:505.00px;color:#111;font-family:'Liberation Sans','Noto Sans CJK JP',sans-serif;font-size:17.5px;font-weight:400;letter-spacing:-0.300px;">P002</span>
<span class="t" style="left:285.60px;top:505.00px;color:#111;font-family:'Liberation Sans','Noto Sans CJK JP',sans-serif;font-size:18.3px;font-weight:300;letter-spacing:-0.600px;">紅茶セット</span>
<span class="t" style="left:478.00px;top:505.00px;color:#111;font-family:'Liberation Sans','Noto Sans CJK JP',sans-serif;font-size:17.5px;font-weight:400;letter-spacing:-0.325px;">2,200</span>
<span class="t" style="left:618.60px;top:505.00px;color:#111;font-family:'Liberation Sans','Noto Sans CJK JP',sans-serif;font-size:17.5px;font-weight:400;">9</span>
<span class="t" style="left:675.30px;top:505.00px;color:#111;font-family:'Liberation Sans','Noto Sans CJK JP',sans-serif;font-size:17.5px;font-weight:400;letter-spacing:0.130px;">19,800</span>
<span class="t" style="left:56.90px;top:535.00px;color:#111;font-family:'Liberation Sans','Noto Sans CJK JP',sans-serif;font-size:17.5px;font-weight:400;letter-spacing:1.186px;">2025/8/4</span>
<span class="t" style="left:141.40px;top:535.00px;color:#111;font-family:'Liberation Sans','Noto Sans CJK JP',sans-serif;font-size:17.5px;font-weight:400;letter-spacing:-0.300px;">P003</span>
<span class="t" style="left:282.50px;top:535.00px;color:#111;font-family:'Liberation Sans','Noto Sans CJK JP',sans-serif;font-size:18.3px;font-weight:300;letter-spacing:0.325px;">ドリッパー</span>
<span class="t" style="left:491.00px;top:535.00px;color:#111;font-family:'Liberation Sans','Noto Sans CJK JP',sans-serif;font-size:17.5px;font-weight:400;letter-spacing:-0.225px;">880</span>
<span class="t" style="left:618.60px;top:535.00px;color:#111;font-family:'Liberation Sans','Noto Sans CJK JP',sans-serif;font-size:17.5px;font-weight:400;">2</span>
<span class="t" style="left:686.30px;top:535.00px;color:#111;font-family:'Liberation Sans','Noto Sans CJK JP',sans-serif;font-size:17.5px;font-weight:400;letter-spacing:-0.075px;">1,760</span>
<span class="t" style="left:56.90px;top:565.00px;color:#111;font-family:'Liberation Sans','Noto Sans CJK JP',sans-serif;font-size:17.5px;font-weight:400;letter-spacing:1.186px;">2025/8/4</span>
<span class="t" style="left:141.40px;top:565.00px;color:#111;font-family:'Liberation Sans','Noto Sans CJK JP',sans-serif;font-size:17.5px;font-weight:400;letter-spacing:-0.300px;">P004</span>
<span class="t" style="left:284.80px;top:565.50px;color:#111;font-family:'Liberation Sans','Noto Sans CJK JP',sans-serif;font-size:18.3px;font-weight:300;letter-spacing:-0.500px;">マグカップ</span>
<span class="t" style="left:477.00px;top:565.00px;color:#111;font-family:'Liberation Sans','Noto Sans CJK JP',sans-serif;font-size:17.5px;font-weight:400;letter-spacing:-0.075px;">1,000</span>
<span class="t" style="left:618.60px;top:565.00px;color:#111;font-family:'Liberation Sans','Noto Sans CJK JP',sans-serif;font-size:17.5px;font-weight:400;">1</span>
<span class="t" style="left:686.30px;top:565.00px;color:#111;font-family:'Liberation Sans','Noto Sans CJK JP',sans-serif;font-size:17.5px;font-weight:400;letter-spacing:-0.075px;">1,000</span>
<span class="t" style="left:56.90px;top:595.00px;color:#111;font-family:'Liberation Sans','Noto Sans CJK JP',sans-serif;font-size:17.5px;font-weight:400;letter-spacing:1.186px;">2025/8/5</span>
<span class="t" style="left:141.40px;top:595.00px;color:#111;font-family:'Liberation Sans','Noto Sans CJK JP',sans-serif;font-size:17.5px;font-weight:400;letter-spacing:-0.300px;">P001</span>
<span class="t" style="left:284.50px;top:594.50px;color:#111;font-family:'Liberation Sans','Noto Sans CJK JP',sans-serif;font-size:18.3px;font-weight:300;letter-spacing:-0.300px;">コーヒー豆</span>
<span class="t" style="left:477.00px;top:595.00px;color:#111;font-family:'Liberation Sans','Noto Sans CJK JP',sans-serif;font-size:17.5px;font-weight:400;letter-spacing:-0.075px;">1,800</span>
<span class="t" style="left:607.60px;top:595.00px;color:#111;font-family:'Liberation Sans','Noto Sans CJK JP',sans-serif;font-size:17.5px;font-weight:400;letter-spacing:0.600px;">14</span>
<span class="t" style="left:676.30px;top:595.00px;color:#111;font-family:'Liberation Sans','Noto Sans CJK JP',sans-serif;font-size:17.5px;font-weight:400;letter-spacing:-0.070px;">25,200</span>
<span class="t" style="left:56.90px;top:625.00px;color:#111;font-family:'Liberation Sans','Noto Sans CJK JP',sans-serif;font-size:17.5px;font-weight:400;letter-spacing:1.186px;">2025/8/5</span>
<span class="t" style="left:141.40px;top:625.00px;color:#111;font-family:'Liberation Sans','Noto Sans CJK JP',sans-serif;font-size:17.5px;font-weight:400;letter-spacing:-0.300px;">P002</span>
<span class="t" style="left:285.60px;top:625.00px;color:#111;font-family:'Liberation Sans','Noto Sans CJK JP',sans-serif;font-size:18.3px;font-weight:300;letter-spacing:-0.600px;">紅茶セット</span>
<span class="t" style="left:478.00px;top:625.00px;color:#111;font-family:'Liberation Sans','Noto Sans CJK JP',sans-serif;font-size:17.5px;font-weight:400;letter-spacing:-0.325px;">2,200</span>
<span class="t" style="left:607.60px;top:625.00px;color:#111;font-family:'Liberation Sans','Noto Sans CJK JP',sans-serif;font-size:17.5px;font-weight:400;letter-spacing:0.600px;">18</span>
<span class="t" style="left:676.30px;top:625.00px;color:#111;font-family:'Liberation Sans','Noto Sans CJK JP',sans-serif;font-size:17.5px;font-weight:400;letter-spacing:-0.070px;">39,600</span>
<span class="t" style="left:56.90px;top:655.00px;color:#111;font-family:'Liberation Sans','Noto Sans CJK JP',sans-serif;font-size:17.5px;font-weight:400;letter-spacing:1.186px;">2025/8/5</span>
<span class="t" style="left:141.40px;top:655.00px;color:#111;font-family:'Liberation Sans','Noto Sans CJK JP',sans-serif;font-size:17.5px;font-weight:400;letter-spacing:-0.300px;">P003</span>
<span class="t" style="left:282.50px;top:655.00px;color:#111;font-family:'Liberation Sans','Noto Sans CJK JP',sans-serif;font-size:18.3px;font-weight:300;letter-spacing:0.325px;">ドリッパー</span>
<span class="t" style="left:491.00px;top:655.00px;color:#111;font-family:'Liberation Sans','Noto Sans CJK JP',sans-serif;font-size:17.5px;font-weight:400;letter-spacing:-0.225px;">880</span>
<span class="t" style="left:618.60px;top:655.00px;color:#111;font-family:'Liberation Sans','Noto Sans CJK JP',sans-serif;font-size:17.5px;font-weight:400;">8</span>
<span class="t" style="left:687.30px;top:655.00px;color:#111;font-family:'Liberation Sans','Noto Sans CJK JP',sans-serif;font-size:17.5px;font-weight:400;letter-spacing:-0.325px;">7,040</span>
<span class="t" style="left:56.90px;top:685.00px;color:#111;font-family:'Liberation Sans','Noto Sans CJK JP',sans-serif;font-size:17.5px;font-weight:400;letter-spacing:1.186px;">2025/8/6</span>
<span class="t" style="left:141.40px;top:685.00px;color:#111;font-family:'Liberation Sans','Noto Sans CJK JP',sans-serif;font-size:17.5px;font-weight:400;letter-spacing:-0.300px;">P001</span>
<span class="t" style="left:284.50px;top:684.50px;color:#111;font-family:'Liberation Sans','Noto Sans CJK JP',sans-serif;font-size:18.3px;font-weight:300;letter-spacing:-0.300px;">コーヒー豆</span>
<span class="t" style="left:477.00px;top:685.00px;color:#111;font-family:'Liberation Sans','Noto Sans CJK JP',sans-serif;font-size:17.5px;font-weight:400;letter-spacing:-0.075px;">1,800</span>
<span class="t" style="left:607.60px;top:685.00px;color:#111;font-family:'Liberation Sans','Noto Sans CJK JP',sans-serif;font-size:17.5px;font-weight:400;letter-spacing:0.600px;">16</span>
<span class="t" style="left:676.30px;top:685.00px;color:#111;font-family:'Liberation Sans','Noto Sans CJK JP',sans-serif;font-size:17.5px;font-weight:400;letter-spacing:-0.070px;">28,800</span>
<span class="t" style="left:56.90px;top:715.00px;color:#111;font-family:'Liberation Sans','Noto Sans CJK JP',sans-serif;font-size:17.5px;font-weight:400;letter-spacing:1.186px;">2025/8/6</span>
<span class="t" style="left:141.40px;top:715.00px;color:#111;font-family:'Liberation Sans','Noto Sans CJK JP',sans-serif;font-size:17.5px;font-weight:400;letter-spacing:-0.300px;">P002</span>
<span class="t" style="left:285.60px;top:715.00px;color:#111;font-family:'Liberation Sans','Noto Sans CJK JP',sans-serif;font-size:18.3px;font-weight:300;letter-spacing:-0.600px;">紅茶セット</span>
<span class="t" style="left:478.00px;top:715.00px;color:#111;font-family:'Liberation Sans','Noto Sans CJK JP',sans-serif;font-size:17.5px;font-weight:400;letter-spacing:-0.325px;">2,200</span>
<span class="t" style="left:607.60px;top:715.00px;color:#111;font-family:'Liberation Sans','Noto Sans CJK JP',sans-serif;font-size:17.5px;font-weight:400;letter-spacing:0.600px;">13</span>
<span class="t" style="left:676.30px;top:715.00px;color:#111;font-family:'Liberation Sans','Noto Sans CJK JP',sans-serif;font-size:17.5px;font-weight:400;letter-spacing:-0.070px;">28,600</span>
</div>
<div id="vscroll"></div><div id="vthumb"></div>
<div id="tabs"></div><div id="acttab"></div><div class="abs" style="left:137px;top:1012px;width:5px;height:5px;background:radial-gradient(circle at 0 100%,#E5E9EA 4.4px,#fff 5px)"></div><div class="abs" style="left:288px;top:1012px;width:5px;height:5px;background:radial-gradient(circle at 100% 100%,#E5E9EA 4.4px,#fff 5px)"></div><div id="acttabul"></div><div id="hscroll"></div><div id="hthumb"></div>
<div id="status"></div><div id="viewsel"></div>
<svg class="abs" style="left:0;top:0" width="1920" height="1080" viewBox="0 0 1920 1080" fill="none">
<rect x="24.8" y="21" width="16.2" height="20" rx="1" fill="#fff"/><rect x="21" y="25" width="12.4" height="12" rx=".8" fill="#fff"/>
<path d="M33.7 22.3h6v3.3h-6zM33.7 27.3h6v3.3h-6zM33.7 32.4h6v3.3h-6zM33.7 37.4h6v2.2h-6zM26 22.3h6v2.2h-6zM26 37.4h6v2.2h-6z" fill="#107C41"/>
<path d="M207.6 21.2V29.3H215.8M207.9 29L214 23C217 20.3 222 20.8 223.8 24.5C224.8 27 224.2 29.5 222.5 31.5L214.2 40.2" stroke="#fff" stroke-width="1.5" stroke-linecap="square" stroke-linejoin="miter"/>
<path d="M233.9 29.1L237.05 32.5L240.20000000000002 29.1" fill="none" stroke="#fff" stroke-width="1.4" stroke-linecap="round" stroke-linejoin="round"/>
<path d="M272.4 21.2V29.3H264.2M272.1 29L266 23C263 20.3 258 20.8 256.2 24.5C255.2 27 255.8 29.5 257.5 31.5L265.8 40.2" stroke="#5FAE83" stroke-width="1.5" stroke-linecap="square" stroke-linejoin="miter"/>
<path d="M282.40000000000003 29.1L285.3 32.5L288.2 29.1" fill="none" stroke="#5FAE83" stroke-width="1.4" stroke-linecap="round" stroke-linejoin="round"/>
<path d="M307.8 28.7H315.4" stroke="#fff" stroke-width="1.3"/><path d="M308.6 31.900000000000002L311.6 35.1L314.59999999999997 31.900000000000002" fill="none" stroke="#fff" stroke-width="1.3" stroke-linecap="round" stroke-linejoin="round"/>
<path d="M525.6 28.7L530.3 33.5L535.0 28.7" fill="none" stroke="#fff" stroke-width="1.4" stroke-linecap="round" stroke-linejoin="round"/>
<circle cx="767.3" cy="28.7" r="6.4" stroke="#2B7A4B" stroke-width="1.4"/><path d="M762.8 33.4L757.8 39.6" stroke="#2B7A4B" stroke-width="1.5" stroke-linecap="round"/>
<path d="M1763 30.2H1775.2" stroke="#fff" stroke-width="1.4"/><rect x="1823.2" y="25.3" width="12" height="11.6" rx="1.8" stroke="#fff" stroke-width="1.4"/><path d="M1882.8 25.2L1895.3 37.2M1895.3 25.2L1882.8 37.2" stroke="#fff" stroke-width="1.4"/>
<path d="M1736.5 73.6H1748.5V82.3H1741.2L1737.9 85.3V82.3H1736.5Z" stroke="#333" stroke-width="1.3" stroke-linejoin="round"/>
<path d="M1833 78.2H1829.6V86H1841.6V82.6" stroke="#fff" stroke-width="1.4"/><path d="M1838.2 73.2L1842.6 77L1838.2 80.8M1842.3 77H1838.5C1835.5 77 1833.6 79 1833.6 82.5" stroke="#fff" stroke-width="1.4" stroke-linejoin="round" stroke-linecap="round"/>
<path d="M1892.8 78.89999999999999L1895.6 82.0L1898.4 78.89999999999999" fill="none" stroke="#fff" stroke-width="1.4" stroke-linecap="round" stroke-linejoin="round"/>
<rect x="40.8" y="114.8" width="25.2" height="29.4" rx="1" fill="#FCDFA8" stroke="#E8852B" stroke-width="1.6"/>
<rect x="44" y="118" width="19" height="23.4" fill="#FAFAFA"/>
<path d="M45.7 119.3V115.6H49.8C49.8 111.8 51.3 109.7 53.1 109.7C54.9 109.7 56.4 111.8 56.4 115.6H60.5V119.3Z" fill="#FAFAFA" stroke="#7A7A7A" stroke-width="1.4" stroke-linejoin="round"/>
<rect x="55.6" y="123.4" width="19.4" height="24.4" fill="#fff"/>
<rect x="57.6" y="125.4" width="15.5" height="20.5" fill="#FAFAFA" stroke="#6B6B6B" stroke-width="1.5"/>
<path d="M53.800000000000004 179.0L56.400000000000006 182.1L59.0 179.0" fill="none" stroke="#333" stroke-width="1.4" stroke-linecap="round" stroke-linejoin="round"/>
<path d="M96.3 108.2L103.9 123.4M103.7 108.2L96.1 123.4" stroke="#444" stroke-width="1.3" stroke-linecap="round"/>
<circle cx="96.2" cy="125.7" r="1.9" stroke="#2B88D8" stroke-width="1.4"/><circle cx="103.8" cy="125.7" r="1.9" stroke="#2B88D8" stroke-width="1.4"/>
<path d="M97.3 157H90.9V140.5H97.5L100.3 143.2" stroke="#555" stroke-width="1.4" fill="#FAFAFA" stroke-linejoin="round"/>
<path d="M98.6 144.2H105.3L109.3 148.2V159.1H98.6Z" stroke="#555" stroke-width="1.4" fill="#FAFAFA" stroke-linejoin="round"/><path d="M105.2 144.4V148.4H109.2" stroke="#555" stroke-width="1.2"/><path d="M101.2 152.6H106.8M101.2 155.5H106.8" stroke="#555" stroke-width="1.2"/>
<path d="M126.39999999999999 149.10000000000002L129.3 152.29999999999998L132.20000000000002 149.10000000000002" fill="none" stroke="#333" stroke-width="1.4" stroke-linecap="round" stroke-linejoin="round"/>
<path d="M98.2 176.8C96.4 179.4 93.6 180.3 90.5 180.6L98.8 190.4L105.3 184.2Z" fill="#FAFAFA" stroke="#E07A14" stroke-width="1.5" stroke-linejoin="round"/><path d="M94.6 184.4L103 186L98.8 190Z" fill="#F9DE85" stroke="#E07A14" stroke-width="1.3" stroke-linejoin="round"/><path d="M91.4 181.8C95 183.8 100 185.6 103.8 185.9" stroke="#E07A14" stroke-width="1.4"/>
<path d="M98.2 176.5L100.6 174.3L103.2 176.8L107.3 172.3C108.6 171.4 110.2 172.8 109.6 174L105.3 178.7L107.6 181.5L105.5 183.9Z" fill="#fff" stroke="#333" stroke-width="1.4" stroke-linejoin="round"/><path d="M99.8 175.2L106.9 182.5" stroke="#333" stroke-width="1.2"/>
<path d="M140.7 213.5V207.7H146.5" fill="none" stroke="#444" stroke-width="1.3"/><path d="M143.5 210.5L149.3 216.3M144.8 216.3H149.3V211.8" fill="none" stroke="#444" stroke-width="1.3"/>
<path d="M364.8 127.5L367.4 130.2L370.0 127.5" fill="none" stroke="#333" stroke-width="1.4" stroke-linecap="round" stroke-linejoin="round"/>
<path d="M416.8 127.5L419.6 130.2L422.4 127.5" fill="none" stroke="#333" stroke-width="1.4" stroke-linecap="round" stroke-linejoin="round"/>
<path d="M448.2 122.9L451.1 119.6L454 122.9" stroke="#2B88D8" stroke-width="1.6" stroke-linecap="round" stroke-linejoin="round"/>
<path d="M480.2 119.6L483.1 122.9L486 119.6" stroke="#2B88D8" stroke-width="1.6" stroke-linecap="round" stroke-linejoin="round"/>
<path d="M238 174.8H248.8" stroke="#333" stroke-width="1.3"/>
<path d="M264.5 167.10000000000002L267.4 170.29999999999998L270.29999999999995 167.10000000000002" fill="none" stroke="#333" stroke-width="1.4" stroke-linecap="round" stroke-linejoin="round"/>
<path d="M288.6 158.6H306.4M288.6 167.3H306.4M288.6 158.6V175M297.5 158.6V175M306.4 158.6V175" stroke="#555" stroke-width="1.2" stroke-dasharray="1.4 1.3"/><path d="M288 176H307" stroke="#333" stroke-width="1.6"/>
<path d="M318.5 167.10000000000002L321.4 170.29999999999998L324.29999999999995 167.10000000000002" fill="none" stroke="#333" stroke-width="1.4" stroke-linecap="round" stroke-linejoin="round"/>
<path d="M351 160.8L345.2 166.4L350.8 171.8L357.4 164.9" stroke="#333" stroke-width="1.5" stroke-linejoin="round" stroke-linecap="round" fill="#FAFAFA"/><path d="M351 161.2V159.8C351 157.5 354 157.5 354 159.8V165.2" stroke="#555" stroke-width="1.4" stroke-linecap="round"/>
<path d="M355.9 163.2C356.8 162 358.4 162 360 164.2C360.3 166.6 360.1 169 359.6 171C359.2 168.6 358.8 167 358 165.6Z" fill="#1A6FC4"/>
<rect x="342" y="173" width="20" height="5" fill="#FFFF00"/>
<path d="M372.6 167.10000000000002L375.5 170.29999999999998L378.4 167.10000000000002" fill="none" stroke="#333" stroke-width="1.4" stroke-linecap="round" stroke-linejoin="round"/>
<rect x="393" y="173" width="20" height="5" fill="#FF0000"/>
<path d="M423.5 167.10000000000002L426.4 170.29999999999998L429.29999999999995 167.10000000000002" fill="none" stroke="#333" stroke-width="1.4" stroke-linecap="round" stroke-linejoin="round"/>
<path d="M477.3 167.10000000000002L480.29999999999995 170.29999999999998L483.29999999999995 167.10000000000002" fill="none" stroke="#333" stroke-width="1.4" stroke-linecap="round" stroke-linejoin="round"/>
<path d="M486.7 213.5V207.7H492.5" fill="none" stroke="#444" stroke-width="1.3"/><path d="M489.5 210.5L495.3 216.3M490.8 216.3H495.3V211.8" fill="none" stroke="#444" stroke-width="1.3"/>
<path d="M517.3 118.6H535M519.5 123.8H533M517.3 129H535" stroke="#505050" stroke-width="1.5" fill="none"/>
<rect x="543.5" y="113.5" width="29" height="29.2" rx="5" fill="#EBEBEB" stroke="#7A7A7A"/>
<path d="M549 122.5H567M551.5 127.6H564.5M549 132.6H567" stroke="#505050" stroke-width="1.5" fill="none"/>
<path d="M581 127.1H599M583.5 132.2H596.5M581 137.3H599" stroke="#505050" stroke-width="1.5" fill="none"/>
<path d="M517.3 160.1H535M517.3 165.1H530M517.3 170.1H535M517.3 175.1H530" stroke="#505050" stroke-width="1.5" fill="none"/>
<path d="M549 160.1H567M551.5 165.1H564.5M549 170.1H567M551.5 175.1H564.5" stroke="#505050" stroke-width="1.5" fill="none"/>
<path d="M581 160.1H599M586 165.1H599M581 170.1H599M586 175.1H599" stroke="#505050" stroke-width="1.5" fill="none"/>
<path d="M618.6 136.4L631.6 123.4M625.8 123H632V129.2" stroke="#2B88D8" stroke-width="1.5" stroke-linecap="round" stroke-linejoin="round"/>
<path d="M640.8000000000001 127.1L643.7 130.29999999999998L646.6 127.1" fill="none" stroke="#333" stroke-width="1.4" stroke-linecap="round" stroke-linejoin="round"/>
<path d="M613 160.1H631M622.6 165.1H631M622.6 170.1H631M613 175.1H631" stroke="#505050" stroke-width="1.5" fill="none"/>
<path d="M613.6 167.6H620.8M616.6 164.6L613.6 167.6L616.6 170.6" stroke="#2B88D8" stroke-width="1.4" stroke-linecap="round" stroke-linejoin="round"/>
<path d="M645 160.1H663M654.6 165.1H663M654.6 170.1H663M645 175.1H663" stroke="#505050" stroke-width="1.5" fill="none"/>
<path d="M645.4 167.6H652.6M649.6 164.6L652.6 167.6L649.6 170.6" stroke="#2B88D8" stroke-width="1.4" stroke-linecap="round" stroke-linejoin="round"/>
<path d="M708 128.2C708.6 132 706.5 133.9 700.4 133.9M703.4 130.6L700 133.9L703.4 137.2" stroke="#2B88D8" stroke-width="1.5" stroke-linecap="round" stroke-linejoin="round"/>
<rect x="689.7" y="158.7" width="17.8" height="17.3" stroke="#555" stroke-width="1.4" fill="#FAFAFA"/><path d="M698.6 158.7V176" stroke="#555" stroke-width="1.3"/>
<rect x="689.7" y="162.6" width="17.8" height="9.6" fill="#E3F0FB" stroke="#2B88D8" stroke-width="1.4"/><path d="M692.6 167.4H704.8M694.8 165.2L692.6 167.4L694.8 169.6M702.6 165.2L704.8 167.4L702.6 169.6" stroke="#2B88D8" stroke-width="1.3" stroke-linecap="round" stroke-linejoin="round"/>
<path d="M725.5 167.10000000000002L728.4 170.29999999999998L731.3 167.10000000000002" fill="none" stroke="#333" stroke-width="1.4" stroke-linecap="round" stroke-linejoin="round"/>
<path d="M739.7 213.5V207.7H745.5" fill="none" stroke="#444" stroke-width="1.3"/><path d="M742.5 210.5L748.3 216.3M743.8 216.3H748.3V211.8" fill="none" stroke="#444" stroke-width="1.3"/>
<path d="M933.5 127.5L936.4 130.2L939.3 127.5" fill="none" stroke="#333" stroke-width="1.4" stroke-linecap="round" stroke-linejoin="round"/>
<rect x="769.7" y="162.4" width="18.6" height="11.4" stroke="#555" stroke-width="1.4" fill="#FAFAFA"/><path d="M775 165.2C772.6 166 772.6 170.2 775 171M779.6 165.4C777.6 165.8 777 169.8 779.6 170.8M783.2 165.2C785 165.6 785.6 167 785.6 168" stroke="#555" stroke-width="1.2"/>
<path d="M779.6 169.8V176C779.6 178.6 788.6 178.6 788.6 176V169.8" fill="#fff" stroke="#E07A14" stroke-width="1.4"/><ellipse cx="784.1" cy="169.8" rx="4.5" ry="1.9" fill="#fff" stroke="#E07A14" stroke-width="1.4"/><path d="M779.6 173C779.6 175.4 788.6 175.4 788.6 173" stroke="#E07A14" stroke-width="1.3"/>
<path d="M799.5 167.10000000000002L802.4 170.29999999999998L805.3 167.10000000000002" fill="none" stroke="#333" stroke-width="1.4" stroke-linecap="round" stroke-linejoin="round"/>
<path d="M887.6 163.4H897.2M891 160L887.6 163.4L891 166.8" stroke="#2B88D8" stroke-width="1.4" stroke-linecap="round" stroke-linejoin="round"/>
<path d="M919.2 172.6H928.8M925.4 169.2L928.8 172.6L925.4 176" stroke="#2B88D8" stroke-width="1.4" stroke-linecap="round" stroke-linejoin="round"/>
<path d="M939.7 213.5V207.7H945.5" fill="none" stroke="#444" stroke-width="1.3"/><path d="M942.5 210.5L948.3 216.3M943.8 216.3H948.3V211.8" fill="none" stroke="#444" stroke-width="1.3"/>
<rect x="978.2" y="113.8" width="33.6" height="26.3" fill="#FAFAFA" stroke="#5F5F5F" stroke-width="1.5"/><path d="M984 113.8V140M1000.2 113.8V140M1005.8 113.8V140M978.2 122.6H1011.8M978.2 131.2H1011.8" stroke="#5F5F5F" stroke-width="1.3"/>
<rect x="984" y="114" width="15.4" height="8.2" fill="#FF9CA6" stroke="#D9302A" stroke-width="1.3"/><rect x="984" y="131.6" width="18" height="8.2" fill="#FF9CA6" stroke="#D9302A" stroke-width="1.3"/><rect x="984" y="123" width="10.4" height="7.8" fill="#7DB7EC" stroke="#1E6FC1" stroke-width="1.3"/>
<path d="M1008.5 176.9L1011.4 180.1L1014.3 176.9" fill="none" stroke="#333" stroke-width="1.4" stroke-linecap="round" stroke-linejoin="round"/>
<rect x="1052.8" y="113.7" width="34.4" height="26.7" fill="#FAFAFA" stroke="#5F5F5F" stroke-width="1.5"/><rect x="1064.2" y="122.3" width="23" height="18.1" fill="#86BFEC"/><path d="M1064.2 113.7V122.3M1075.6 113.7V122.3M1052.8 122.3H1064.2M1052.8 131H1064.2" stroke="#5F5F5F" stroke-width="1.4"/><path d="M1075.6 122.3V140.4M1064.2 131H1087.2M1087.2 122.3H1064.2V140.4H1087.2V122.3" stroke="#1467BE" stroke-width="1.5"/>
<path d="M1074 137.2C1078 132 1083.5 126 1087.8 122.8C1089 122 1090 122.8 1089.4 124C1086.5 129 1081 135.5 1076.4 139.8ZM1074 137.2C1070.5 136 1068 138.5 1067 140.5C1066 142.3 1064 143.2 1061.6 143.4C1065 146.6 1071 147.4 1074.5 144.8C1077 142.8 1077.2 140.8 1076.4 139.8Z" fill="#fff" stroke="#fff" stroke-width="4.4" stroke-linejoin="round"/><path d="M1074 137.2C1078 132 1083.5 126 1087.8 122.8C1089 122 1090 122.8 1089.4 124C1086.5 129 1081 135.5 1076.4 139.8Z" fill="#FAFAFA" stroke="#444" stroke-width="1.3" stroke-linejoin="round"/><path d="M1074 137.2C1070.5 136 1068 138.5 1067 140.5C1066 142.3 1064 143.2 1061.6 143.4C1065 146.6 1071 147.4 1074.5 144.8C1077 142.8 1077.2 140.8 1076.4 139.8Z" fill="#86BFEC" stroke="#1467BE" stroke-width="1.5" stroke-linejoin="round"/>
<path d="M1098.5 176.9L1101.4 180.1L1104.3000000000002 176.9" fill="none" stroke="#333" stroke-width="1.4" stroke-linecap="round" stroke-linejoin="round"/>
<rect x="1128.8" y="113.7" width="34.4" height="26.7" fill="#FAFAFA" stroke="#5F5F5F" stroke-width="1.5"/><path d="M1135.3 113.7V140.4M1156.7 113.7V140.4M1128.8 119.8H1163.2M1128.8 133.9H1163.2" stroke="#5F5F5F" stroke-width="1.4"/><rect x="1135.3" y="119.8" width="21.4" height="14.1" fill="#86BFEC" stroke="#1467BE" stroke-width="1.6"/>
<path d="M1157.7 120.7H1164.4V141.6H1141.4V134.9H1157.7Z" fill="#fff"/>
<path d="M1150 137.2C1154 132 1159.5 126 1163.8 122.8C1165 122 1166 122.8 1165.4 124C1162.5 129 1157 135.5 1152.4 139.8ZM1150 137.2C1146.5 136 1144 138.5 1143 140.5C1142 142.3 1140 143.2 1137.6 143.4C1141 146.6 1147 147.4 1150.5 144.8C1153 142.8 1153.2 140.8 1152.4 139.8Z" fill="#fff" stroke="#fff" stroke-width="4.4" stroke-linejoin="round"/><path d="M1150 137.2C1154 132 1159.5 126 1163.8 122.8C1165 122 1166 122.8 1165.4 124C1162.5 129 1157 135.5 1152.4 139.8Z" fill="#FAFAFA" stroke="#444" stroke-width="1.3" stroke-linejoin="round"/><path d="M1150 137.2C1146.5 136 1144 138.5 1143 140.5C1142 142.3 1140 143.2 1137.6 143.4C1141 146.6 1147 147.4 1150.5 144.8C1153 142.8 1153.2 140.8 1152.4 139.8Z" fill="#86BFEC" stroke="#1467BE" stroke-width="1.5" stroke-linejoin="round"/>
<path d="M1167.8 176.9L1170.7 180.1L1173.6000000000001 176.9" fill="none" stroke="#333" stroke-width="1.4" stroke-linecap="round" stroke-linejoin="round"/>
<rect x="1204.7" y="109.9" width="18.4" height="16.4" fill="#FAFAFA" stroke="#5F5F5F" stroke-width="1.4"/><path d="M1210.8 109.9V126.30000000000001M1217 109.9V126.30000000000001M1204.7 115.0H1223.1M1204.7 121.2H1223.1" stroke="#5F5F5F" stroke-width="1.2"/>
<rect x="1202" y="114" width="9" height="8.2" fill="#fff"/><rect x="1211.4" y="114.8" width="12.2" height="6.6" fill="#7DB7EC" stroke="#1E6FC1" stroke-width="1.3"/><path d="M1204.4 118.1H1213M1207.6 115L1204.4 118.1L1207.6 121.2" stroke="#2B88D8" stroke-width="1.4" stroke-linecap="round" stroke-linejoin="round"/>
<path d="M1282.6999999999998 117.1L1285.6 120.30000000000001L1288.5 117.1" fill="none" stroke="#333" stroke-width="1.4" stroke-linecap="round" stroke-linejoin="round"/>
<rect x="1204.7" y="141.89999999999998" width="18.4" height="16.4" fill="#FAFAFA" stroke="#5F5F5F" stroke-width="1.4"/><path d="M1210.8 141.89999999999998V158.29999999999998M1217 141.89999999999998V158.29999999999998M1204.7 147.0H1223.1M1204.7 153.2H1223.1" stroke="#5F5F5F" stroke-width="1.2"/>
<rect x="1212" y="146" width="13" height="8.4" fill="#fff"/><rect x="1208" y="147" width="6.4" height="6.2" fill="#7DB7EC" stroke="#1E6FC1" stroke-width="1.3"/><path d="M1216.6 147.2L1222.6 153.2M1222.6 147.2L1216.6 153.2" stroke="#E8352B" stroke-width="1.4" stroke-linecap="round"/>
<path d="M1282.6999999999998 149.0L1285.6 152.2L1288.5 149.0" fill="none" stroke="#333" stroke-width="1.4" stroke-linecap="round" stroke-linejoin="round"/>
<rect x="1204.7" y="175.6" width="18.4" height="15.4" fill="#FAFAFA" stroke="#5F5F5F" stroke-width="1.4"/><path d="M1210 175.6V191M1218 175.6V191M1204.7 180.4H1223.1M1204.7 186.6H1223.1" stroke="#5F5F5F" stroke-width="1.2"/><rect x="1210" y="180.4" width="8" height="6.2" fill="#7DB7EC" stroke="#1E6FC1" stroke-width="1.3"/><path d="M1208.6 173H1219.4M1208.6 171.6V174.4M1219.4 171.6V174.4" stroke="#2B88D8" stroke-width="1.3"/>
<path d="M1265.6999999999998 181.0L1268.6 184.2L1271.5 181.0" fill="none" stroke="#333" stroke-width="1.4" stroke-linecap="round" stroke-linejoin="round"/>
<path d="M1362.6999999999998 117.1L1365.6 120.30000000000001L1368.5 117.1" fill="none" stroke="#333" stroke-width="1.4" stroke-linecap="round" stroke-linejoin="round"/>
<rect x="1326.7" y="141.7" width="18.6" height="16.4" fill="#FAFAFA" stroke="#555" stroke-width="1.4"/><path d="M1326.7 144.4H1345.3" stroke="#555" stroke-width="1.6"/><path d="M1336 147.4V155M1332.8 152L1336 155.2L1339.2 152" stroke="#2B88D8" stroke-width="1.4" stroke-linecap="round" stroke-linejoin="round"/>
<path d="M1354.6999999999998 149.0L1357.6 152.2L1360.5 149.0" fill="none" stroke="#333" stroke-width="1.4" stroke-linecap="round" stroke-linejoin="round"/>
<path d="M1338.4 173L1344.6 179.6L1332.6 190.8L1326.6 184.2Z" fill="#FAFAFA" stroke="#9B30B0" stroke-width="1.5" stroke-linejoin="round"/><path d="M1331.4 179.6L1337.6 186.2L1332.6 190.8L1326.6 184.2Z" fill="#D28CDD" stroke="#9B30B0" stroke-width="1.5" stroke-linejoin="round"/>
<path d="M1354.6999999999998 181.0L1357.6 184.2L1360.5 181.0" fill="none" stroke="#333" stroke-width="1.4" stroke-linecap="round" stroke-linejoin="round"/>
<path d="M1417.2 119.2H1436.4V121.2L1429.4 129.2V137.4H1424.4V129.2L1417.2 121.2Z" fill="#FAFAFA" stroke="#555" stroke-width="1.4" stroke-linejoin="round"/>
<path d="M1444.8 176.9L1447.7 180.1L1450.6000000000001 176.9" fill="none" stroke="#333" stroke-width="1.4" stroke-linecap="round" stroke-linejoin="round"/>
<circle cx="1488" cy="122.3" r="12.4" fill="#FAFAFA" stroke="#555" stroke-width="1.5"/><path d="M1479.2 131.2L1465.8 145" stroke="#555" stroke-width="1.6" stroke-linecap="round"/>
<path d="M1497.8 176.9L1500.7 180.1L1503.6000000000001 176.9" fill="none" stroke="#333" stroke-width="1.4" stroke-linecap="round" stroke-linejoin="round"/>
<rect x="1538.8" y="109.8" width="34.2" height="34.2" stroke="#E0592A" stroke-width="1.7"/><path d="M1542.8 113.8H1553.8V124.8H1542.8ZM1558 113.8H1569V124.8H1558ZM1542.8 129H1553.8V140H1542.8ZM1558 129H1569V140H1558Z" stroke="#E0592A" stroke-width="1.6"/>
<rect x="1610.9" y="109.8" width="34.2" height="34.2" fill="#FAFAFA" stroke="#5A5A5A" stroke-width="1.6"/><rect x="1611.7" y="110.6" width="32.6" height="4" fill="#C8C6C4"/><path d="M1610.9 115.2H1645M1610.9 124.9H1645M1610.9 133.8H1645M1622.1 133.8V144M1633.6 133.8V144" stroke="#6A6866" stroke-width="1.3"/>
<circle cx="1626.6" cy="124.2" r="11.6" fill="#fff"/><circle cx="1626.6" cy="124.2" r="10.4" fill="#FDFDFD" stroke="#333" stroke-width="1.5"/><path d="M1634.2 131.6L1646 143.2" stroke="#fff" stroke-width="3.6"/><path d="M1633.8 131.8L1645.2 143.6" stroke="#333" stroke-width="1.6"/><rect x="1620.9" y="122.8" width="3.4" height="6.5" fill="#C8C6C4" stroke="#8A8886" stroke-width=".9"/><rect x="1628.9" y="119.4" width="3.6" height="9.9" fill="#71AFE5" stroke="#106EBE" stroke-width="1"/><rect x="1624.7" y="117.6" width="3.8" height="11.7" fill="#fff" stroke="#333" stroke-width="1"/>
<defs><linearGradient id="cg1" x1="0" y1="0" x2="0" y2="1"><stop offset="0" stop-color="#2BB0FA"/><stop offset=".28" stop-color="#1494E0"/><stop offset=".6" stop-color="#5CB46A"/><stop offset=".85" stop-color="#D6C81A"/><stop offset="1" stop-color="#F7C800"/></linearGradient><linearGradient id="cg2" x1=".7" y1="0" x2=".3" y2="1"><stop offset="0" stop-color="#A04FEE"/><stop offset=".5" stop-color="#EE5590"/><stop offset="1" stop-color="#FFA24E"/></linearGradient><linearGradient id="cg3" x1="0" y1="0" x2=".6" y2="1"><stop offset="0" stop-color="#0A34C4"/><stop offset="1" stop-color="#1B7AE6"/></linearGradient><linearGradient id="cg4" x1="0" y1="0" x2="1" y2="1"><stop offset="0" stop-color="#FF8A3C"/><stop offset="1" stop-color="#E8402A"/></linearGradient></defs>
<path d="M1683.6 110.2H1689.4C1692.6 110.2 1693 115 1695.2 119.4H1682.6Z" fill="url(#cg3)"/>
<path d="M1676.4 110.2H1684.6C1686.4 110.2 1686.8 111.4 1686.2 113.2L1679.6 131.2C1678.8 133.2 1677.6 134.2 1675.6 134.2H1669.4C1666.6 134.2 1665.6 132.4 1666.2 129.8C1667.6 123.6 1669.4 117.4 1671.6 113.6C1672.8 111.4 1674.2 110.2 1676.4 110.2Z" fill="url(#cg1)"/>
<path d="M1673.8 134H1685L1682.4 143.6H1680.4C1677 143.6 1676.6 139 1673.8 134Z" fill="url(#cg4)"/>
<path d="M1693.4 119.8H1698.6C1701.4 119.8 1702.4 121.6 1701.8 124.2C1700.4 130.4 1698.6 136.6 1696.4 140.4C1695.2 142.6 1693.8 143.8 1691.6 143.8H1683.8C1682 143.8 1681.6 142.6 1682.2 140.8L1688.4 122.8C1689.2 120.8 1690.4 119.8 1693.4 119.8Z" fill="url(#cg2)"/>
<path d="M1781.6 137.6H1774.6C1773.4 137.6 1772.6 136.8 1772.6 135.6V117.6C1772.6 116.4 1773.4 115.6 1774.6 115.6H1785.3L1790.5 120.6V127.6" stroke="#2B62D9" stroke-width="1.5" stroke-linejoin="round" stroke-linecap="round"/>
<path d="M1781.2 120.4V121M1781.5 122.4C1781.6 126.4 1779.4 129.4 1776.2 130.6M1782.2 125.8C1783.6 126.8 1785.4 127.4 1787.6 127.4" stroke="#2B62D9" stroke-width="1.1" stroke-linecap="round"/>
<path d="M1788.6 136.2C1786.6 135 1787.2 133.6 1788.6 132.2L1792 129.2C1794 127.6 1796.2 128.8 1796.8 130.6C1797.2 132 1796.2 133 1794.6 134.6" stroke="#2B62D9" stroke-width="1.4" stroke-linecap="round"/><path d="M1791.4 134.4C1792.8 136.2 1792.2 137.4 1790.8 138.8L1787.6 141.8C1785.6 143.4 1783.6 142 1783.2 140.4C1782.8 139 1783.8 138 1785.4 136.4" stroke="#2B62D9" stroke-width="1.4" stroke-linecap="round"/>
<path d="M1886.0 204.10000000000002L1891.1 209.29999999999998L1896.2 204.10000000000002" fill="none" stroke="#333" stroke-width="1.4" stroke-linecap="round" stroke-linejoin="round"/>
<path d="M120.8 252.10000000000002L126.0 256.3L131.20000000000002 252.10000000000002" fill="none" stroke="#333" stroke-width="1.4" stroke-linecap="round" stroke-linejoin="round"/>
<path d="M149.3 246.4h2.6v2.6h-2.6zM149.3 251.6h2.6v2.6h-2.6zM149.3 256.8h2.6v2.6h-2.6z" fill="#3a3a3a"/>
<path d="M172 245.4L185.6 259M185.6 245.4L172 259" stroke="#A0A0A0" stroke-width="1.3"/><path d="M199.4 252.6L205.8 258.4L218 245.4" stroke="#A0A0A0" stroke-width="1.3"/>
<path d="M256.0 250.70000000000002L260.9 255.29999999999998L265.79999999999995 250.70000000000002" fill="none" stroke="#777" stroke-width="1.2" stroke-linecap="round" stroke-linejoin="round"/>
<path d="M1892.1999999999998 248.5L1897.4 253.7L1902.6000000000001 248.5" fill="none" stroke="#333" stroke-width="1.4" stroke-linecap="round" stroke-linejoin="round"/>
<path d="M40 1025.4L33.4 1031.2L40 1037M74 1025.4L80.6 1031.2L74 1037" stroke="#8E8E8E" stroke-width="1.5" stroke-linecap="round" stroke-linejoin="round"/>
<path d="M293.5 1020V1043M401.7 1020V1043" stroke="#C6C6C6" stroke-width="1"/>
<path d="M455.2 1030.8H468.2M461.7 1024.3V1037.3" stroke="#333" stroke-width="1.5"/>
<path d="M1154.5 1025.2h2.6v2.6h-2.6zM1154.5 1030.8h2.6v2.6h-2.6zM1154.5 1036.4h2.6v2.6h-2.6z" fill="#3a3a3a"/>
<path d="M1190.6 1026.6V1036.2L1182.8 1031.4ZM1882 1026.6V1036.2L1889.8 1031.4Z" fill="#6E6E6E"/>
<path d="M1900.8 292.6H1911.2L1906 284.4ZM1900.8 1000.4H1911.2L1906 1008.6Z" fill="#6E6E6E"/>
<path d="M101.6 1058.4H118.6M101.6 1058.4V1074.4H107M104.4 1062.6H108M104.4 1066H107M104.4 1069.4H106.6" stroke="#444" stroke-width="1.4"/><path d="M101.6 1060.8H118.6" stroke="#444" stroke-width="1.2"/><circle cx="113.4" cy="1069" r="5" stroke="#444" stroke-width="1.4" fill="#F3F3F3"/><circle cx="113.4" cy="1069" r="2.2" fill="#444"/>
<circle cx="148.8" cy="1059.8" r="1.9" stroke="#2a2a2a" stroke-width="1.3"/><path d="M141.8 1061.6C141.5 1060 143 1059.6 144 1060.6C145.6 1062.3 152 1062.3 153.6 1060.6C154.6 1059.6 156.1 1060 155.8 1061.6C155.4 1063.1 152.6 1063.4 151.7 1064.6V1067.4M145.8 1063.6C146.5 1066.6 145.5 1069.6 144.1 1072.2C143.4 1073.7 145 1074.7 146.3 1073.6" stroke="#2a2a2a" stroke-width="1.3" stroke-linecap="round" stroke-linejoin="round"/><path d="M149.6 1070.2L153 1074L159.6 1067.6" stroke="#2a2a2a" stroke-width="1.4" stroke-linecap="round" stroke-linejoin="round"/>
<rect x="1538.6" y="1057.6" width="15" height="15" stroke="#444" stroke-width="1.3"/><path d="M1543.6 1057.6V1072.6M1548.6 1057.6V1072.6M1538.6 1062.6H1553.6M1538.6 1067.6H1553.6" stroke="#444" stroke-width="1.2"/>
<rect x="1588.6" y="1057.6" width="16.4" height="15" stroke="#444" stroke-width="1.3"/><rect x="1592.6" y="1060.6" width="8.4" height="9.4" stroke="#444" stroke-width="1.1"/><path d="M1594.6 1063.4H1599M1594.6 1065.4H1599M1594.6 1067.4H1599" stroke="#444" stroke-width=".9"/>
<rect x="1638.6" y="1057.6" width="16.4" height="15" stroke="#444" stroke-width="1.3"/><path d="M1643.4 1057.6V1066H1650.4V1057.6" stroke="#444" stroke-width="1.2"/>
<path d="M1678.6 1065.4H1688.8M1826.4 1065.4H1836M1831.2 1060.6V1070.2" stroke="#444" stroke-width="1.3"/><path d="M1695 1065.4H1820" stroke="#8A8A8A" stroke-width="1"/><rect x="1755" y="1058.8" width="5.4" height="13.6" rx="1" fill="#555"/>
<text x="0" y="0" transform="translate(615.2 130.6) rotate(-45)" font-family="Liberation Sans, sans-serif" font-size="12" fill="#444">ab</text>
</svg>
<span class="t" style="left:61.30px;top:11.80px;color:#FFFFFF;font-family:'Liberation Sans','Noto Sans CJK JP',sans-serif;font-size:15px;font-weight:400;font-feature-settings:'palt' 1;">自動保存</span>
<span class="t" style="left:138.12px;top:11.00px;color:#107C41;font-family:'Liberation Sans','Noto Sans CJK JP',sans-serif;font-size:14px;font-weight:400;font-feature-settings:'palt' 1;transform:scaleX(0.8750);">オン</span>
<span class="t" style="left:346.50px;top:12.40px;color:#FFFFFF;font-family:'Liberation Sans','Noto Sans CJK JP',sans-serif;font-size:15.5px;font-weight:400;font-feature-settings:'palt' 1;">売上一覧.xlsx</span>
<span class="t" style="left:445.80px;top:11.80px;color:#FFFFFF;font-family:'Liberation Sans','Noto Sans CJK JP',sans-serif;font-size:15.5px;font-weight:400;font-feature-settings:'palt' 1;transform:scaleX(1.3200);">•</span>
<span class="t" style="left:461.00px;top:12.40px;color:#FFFFFF;font-family:'Liberation Sans','Noto Sans CJK JP',sans-serif;font-size:15.5px;font-weight:400;font-feature-settings:'palt' 1;transform:scaleX(0.9194);">保存済み</span>
<span class="t" style="left:792.00px;top:11.10px;color:#2B7A4B;font-family:'Liberation Sans','Noto Sans CJK JP',sans-serif;font-size:16.5px;font-weight:400;font-feature-settings:'palt' 1;transform:scaleX(1.0500);">検索</span>
<span class="t" style="left:23.70px;top:11.00px;color:#107C41;font-family:'Liberation Sans','Noto Sans CJK JP',sans-serif;font-size:11px;font-weight:700;font-feature-settings:'palt' 1;transform:scaleX(1.0429);">X</span>
<span class="t" style="left:15.48px;top:59.90px;color:#242424;font-family:'Liberation Sans','Noto Sans CJK JP',sans-serif;font-size:16.5px;font-weight:400;font-feature-settings:'palt' 1;transform:scaleX(0.8161);">ファイル</span>
<span class="t" style="left:84.36px;top:60.90px;color:#242424;font-family:'Liberation Sans','Noto Sans CJK JP',sans-serif;font-size:16.5px;font-weight:700;font-feature-settings:'palt' 1;transform:scaleX(0.9391);">ホーム</span>
<span class="t" style="left:152.50px;top:60.90px;color:#242424;font-family:'Liberation Sans','Noto Sans CJK JP',sans-serif;font-size:16.5px;font-weight:400;font-feature-settings:'palt' 1;transform:scaleX(0.9758);">挿入</span>
<span class="t" style="left:210.80px;top:60.90px;color:#242424;font-family:'Liberation Sans','Noto Sans CJK JP',sans-serif;font-size:16.5px;font-weight:400;font-feature-settings:'palt' 1;transform:scaleX(0.9758);">描画</span>
<span class="t" style="left:270.11px;top:60.90px;color:#242424;font-family:'Liberation Sans','Noto Sans CJK JP',sans-serif;font-size:16.5px;font-weight:400;font-feature-settings:'palt' 1;transform:scaleX(0.8927);">ページ レイアウト</span>
<span class="t" style="left:409.70px;top:60.90px;color:#242424;font-family:'Liberation Sans','Noto Sans CJK JP',sans-serif;font-size:16.5px;font-weight:400;font-feature-settings:'palt' 1;">数式</span>
<span class="t" style="left:468.50px;top:61.40px;color:#242424;font-family:'Liberation Sans','Noto Sans CJK JP',sans-serif;font-size:16.5px;font-weight:400;font-feature-settings:'palt' 1;transform:scaleX(0.8804);">データ</span>
<span class="t" style="left:534.70px;top:60.90px;color:#242424;font-family:'Liberation Sans','Noto Sans CJK JP',sans-serif;font-size:16.5px;font-weight:400;font-feature-settings:'palt' 1;">校閲</span>
<span class="t" style="left:592.50px;top:60.90px;color:#242424;font-family:'Liberation Sans','Noto Sans CJK JP',sans-serif;font-size:16.5px;font-weight:400;font-feature-settings:'palt' 1;">表示</span>
<span class="t" style="left:649.50px;top:60.90px;color:#242424;font-family:'Liberation Sans','Noto Sans CJK JP',sans-serif;font-size:16.5px;font-weight:400;font-feature-settings:'palt' 1;">開発</span>
<span class="t" style="left:707.62px;top:61.40px;color:#242424;font-family:'Liberation Sans','Noto Sans CJK JP',sans-serif;font-size:16.5px;font-weight:400;font-feature-settings:'palt' 1;transform:scaleX(0.8830);">ヘルプ</span>
<span class="t" style="left:778.50px;top:61.60px;color:#242424;font-family:'Liberation Sans','Noto Sans CJK JP',sans-serif;font-size:17px;font-weight:400;font-feature-settings:'palt' 1;transform:scaleX(1.0847);">Acrobat</span>
<span class="t" style="left:1754.00px;top:60.00px;color:#242424;font-family:'Liberation Sans','Noto Sans CJK JP',sans-serif;font-size:15px;font-weight:400;font-feature-settings:'palt' 1;">コメント</span>
<span class="t" style="left:1849.40px;top:60.50px;color:#FFFFFF;font-family:'Liberation Sans','Noto Sans CJK JP',sans-serif;font-size:16.5px;font-weight:500;font-feature-settings:'palt' 1;">共有</span>
<span class="t" style="left:36.16px;top:191.50px;color:#3b3b3b;font-family:'Liberation Sans','Noto Sans CJK JP',sans-serif;font-size:14.5px;font-weight:400;font-feature-settings:'palt' 1;transform:scaleX(0.8364);">クリップボード</span>
<span class="t" style="left:295.09px;top:190.50px;color:#3b3b3b;font-family:'Liberation Sans','Noto Sans CJK JP',sans-serif;font-size:14.5px;font-weight:400;font-feature-settings:'palt' 1;transform:scaleX(0.9130);">フォント</span>
<span class="t" style="left:602.00px;top:191.00px;color:#3b3b3b;font-family:'Liberation Sans','Noto Sans CJK JP',sans-serif;font-size:14.5px;font-weight:400;font-feature-settings:'palt' 1;transform:scaleX(0.9655);">配置</span>
<span class="t" style="left:828.00px;top:191.50px;color:#3b3b3b;font-family:'Liberation Sans','Noto Sans CJK JP',sans-serif;font-size:14.5px;font-weight:400;font-feature-settings:'palt' 1;transform:scaleX(1.0345);">数値</span>
<span class="t" style="left:1047.14px;top:192.00px;color:#3b3b3b;font-family:'Liberation Sans','Noto Sans CJK JP',sans-serif;font-size:14.5px;font-weight:400;font-feature-settings:'palt' 1;transform:scaleX(0.8627);">スタイル</span>
<span class="t" style="left:1236.60px;top:191.50px;color:#3b3b3b;font-family:'Liberation Sans','Noto Sans CJK JP',sans-serif;font-size:14.5px;font-weight:400;font-feature-settings:'palt' 1;transform:scaleX(0.9038);">セル</span>
<span class="t" style="left:1399.00px;top:191.50px;color:#3b3b3b;font-family:'Liberation Sans','Noto Sans CJK JP',sans-serif;font-size:14.5px;font-weight:400;font-feature-settings:'palt' 1;">編集</span>
<span class="t" style="left:1532.88px;top:191.00px;color:#3b3b3b;font-family:'Liberation Sans','Noto Sans CJK JP',sans-serif;font-size:14.5px;font-weight:400;font-feature-settings:'palt' 1;transform:scaleX(0.8650);">アドイン</span>
<span class="t" style="left:1726.00px;top:191.90px;color:#3b3b3b;font-family:'Liberation Sans','Noto Sans CJK JP',sans-serif;font-size:15px;font-weight:400;font-feature-settings:'palt' 1;transform:scaleX(1.0869);">Adobe Acrobat</span>
<span class="t" style="left:29.00px;top:142.10px;color:#242424;font-family:'Liberation Sans','Noto Sans CJK JP',sans-serif;font-size:15px;font-weight:400;font-feature-settings:'palt' 1;transform:scaleX(0.8842);">貼り付け</span>
<span class="t" style="left:166.63px;top:108.50px;color:#242424;font-family:'Liberation Sans','Noto Sans CJK JP',sans-serif;font-size:15px;font-weight:400;font-feature-settings:'palt' 1;transform:scaleX(0.8672);">游ゴシック</span>
<span class="t" style="left:379.93px;top:108.00px;color:#242424;font-family:'Liberation Sans','Noto Sans CJK JP',sans-serif;font-size:15.5px;font-weight:400;font-feature-settings:'palt' 1;transform:scaleX(1.0667);">11</span>
<span class="t" style="left:767.00px;top:108.50px;color:#242424;font-family:'Liberation Sans','Noto Sans CJK JP',sans-serif;font-size:15px;font-weight:400;font-feature-settings:'palt' 1;transform:scaleX(0.9667);">標準</span>
<span class="t" style="left:174.75px;top:146.60px;color:#242424;font-family:'Liberation Sans','Noto Sans CJK JP',sans-serif;font-size:16.5px;font-weight:700;font-feature-settings:'palt' 1;transform:scaleX(0.8545);">B</span>
<span class="t" style="left:208.00px;top:146.10px;color:#242424;font-family:'Liberation Serif','Noto Serif CJK SC',serif;font-size:17.5px;font-weight:400;font-style:italic;font-feature-settings:'palt' 1;transform:scaleX(1.0857);">I</span>
<span class="t" style="left:236.81px;top:146.00px;color:#242424;font-family:'Liberation Sans','Noto Sans CJK JP',sans-serif;font-size:15.5px;font-weight:400;font-feature-settings:'palt' 1;transform:scaleX(1.1944);">U</span>
<span class="t" style="left:967.00px;top:140.50px;color:#242424;font-family:'Liberation Sans','Noto Sans CJK JP',sans-serif;font-size:15px;font-weight:400;font-feature-settings:'palt' 1;">条件付き</span>
<span class="t" style="left:972.50px;top:158.50px;color:#242424;font-family:'Liberation Sans','Noto Sans CJK JP',sans-serif;font-size:15px;font-weight:400;font-feature-settings:'palt' 1;transform:scaleX(0.9500);">書式</span>
<span class="t" style="left:1031.00px;top:140.50px;color:#242424;font-family:'Liberation Sans','Noto Sans CJK JP',sans-serif;font-size:15px;font-weight:400;font-feature-settings:'palt' 1;transform:scaleX(0.8280);">テーブルとして</span>
<span class="t" style="left:1032.00px;top:158.50px;color:#242424;font-family:'Liberation Sans','Noto Sans CJK JP',sans-serif;font-size:15px;font-weight:400;font-feature-settings:'palt' 1;">書式設定</span>
<span class="t" style="left:1127.65px;top:140.50px;color:#242424;font-family:'Liberation Sans','Noto Sans CJK JP',sans-serif;font-size:15px;font-weight:400;font-feature-settings:'palt' 1;transform:scaleX(0.8537);">セルの</span>
<span class="t" style="left:1116.16px;top:159.00px;color:#242424;font-family:'Liberation Sans','Noto Sans CJK JP',sans-serif;font-size:15px;font-weight:400;font-feature-settings:'palt' 1;transform:scaleX(0.8385);">スタイル</span>
<span class="t" style="left:1229.40px;top:99.00px;color:#242424;font-family:'Liberation Sans','Noto Sans CJK JP',sans-serif;font-size:15px;font-weight:400;font-feature-settings:'palt' 1;transform:scaleX(0.9533);">挿入</span>
<span class="t" style="left:1228.40px;top:130.90px;color:#242424;font-family:'Liberation Sans','Noto Sans CJK JP',sans-serif;font-size:15px;font-weight:400;font-feature-settings:'palt' 1;">削除</span>
<span class="t" style="left:1229.40px;top:162.75px;color:#242424;font-family:'Liberation Sans','Noto Sans CJK JP',sans-serif;font-size:15px;font-weight:400;font-feature-settings:'palt' 1;transform:scaleX(0.9533);">書式</span>
<span class="t" style="left:1388.00px;top:140.50px;color:#242424;font-family:'Liberation Sans','Noto Sans CJK JP',sans-serif;font-size:15px;font-weight:400;font-feature-settings:'palt' 1;transform:scaleX(0.8694);">並べ替えと</span>
<span class="t" style="left:1385.20px;top:158.50px;color:#242424;font-family:'Liberation Sans','Noto Sans CJK JP',sans-serif;font-size:15px;font-weight:400;font-feature-settings:'palt' 1;transform:scaleX(0.7969);">フィルター</span>
<span class="t" style="left:1464.00px;top:140.50px;color:#242424;font-family:'Liberation Sans','Noto Sans CJK JP',sans-serif;font-size:15px;font-weight:400;font-feature-settings:'palt' 1;transform:scaleX(0.8953);">検索と</span>
<span class="t" style="left:1461.00px;top:158.50px;color:#242424;font-family:'Liberation Sans','Noto Sans CJK JP',sans-serif;font-size:15px;font-weight:400;font-feature-settings:'palt' 1;">選択</span>
<span class="t" style="left:1544.74px;top:140.00px;color:#242424;font-family:'Liberation Sans','Noto Sans CJK JP',sans-serif;font-size:15px;font-weight:400;font-feature-settings:'palt' 1;transform:scaleX(0.8560);">アド</span>
<span class="t" style="left:1544.78px;top:158.00px;color:#242424;font-family:'Liberation Sans','Noto Sans CJK JP',sans-serif;font-size:15px;font-weight:400;font-feature-settings:'palt' 1;transform:scaleX(0.8231);">イン</span>
<span class="t" style="left:1610.60px;top:141.00px;color:#242424;font-family:'Liberation Sans','Noto Sans CJK JP',sans-serif;font-size:15px;font-weight:400;font-feature-settings:'palt' 1;transform:scaleX(0.8190);">データ</span>
<span class="t" style="left:1613.00px;top:158.50px;color:#242424;font-family:'Liberation Sans','Noto Sans CJK JP',sans-serif;font-size:15px;font-weight:400;font-feature-settings:'palt' 1;">分析</span>
<span class="t" style="left:1659.40px;top:139.60px;color:#242424;font-family:'Liberation Sans','Noto Sans CJK JP',sans-serif;font-size:15px;font-weight:400;font-feature-settings:'palt' 1;transform:scaleX(1.0766);">Copilot</span>
<span class="t" style="left:1737.55px;top:140.50px;color:#242424;font-family:'Liberation Sans','Noto Sans CJK JP',sans-serif;font-size:15px;font-weight:400;font-feature-settings:'palt' 1;transform:scaleX(0.9500);">PDF を作成し</span>
<span class="t" style="left:1740.00px;top:158.50px;color:#242424;font-family:'Liberation Sans','Noto Sans CJK JP',sans-serif;font-size:15px;font-weight:400;font-feature-settings:'palt' 1;transform:scaleX(0.8438);">てリンクを共有</span>
<span class="t" style="left:17.73px;top:234.80px;color:#242424;font-family:'Liberation Sans','Noto Sans CJK JP',sans-serif;font-size:17.5px;font-weight:400;font-feature-settings:'palt' 1;transform:scaleX(0.9667);">C2</span>
<span class="t" style="left:291.00px;top:234.10px;color:#1a1a1a;font-family:'Liberation Mono','Noto Sans CJK JP',monospace;font-size:16px;font-weight:400;font-feature-settings:'palt' 1;letter-spacing:0.455px;">=XLOOKUP(B2,</span>
<span class="t" style="left:411.00px;top:232.50px;color:#1a1a1a;font-family:'Liberation Sans','Noto Sans CJK JP',sans-serif;font-size:16px;font-weight:300;letter-spacing:2.500px;">商品マスタ</span>
<span class="t" style="left:501.00px;top:234.10px;color:#1a1a1a;font-family:'Liberation Mono','Noto Sans CJK JP',monospace;font-size:16px;font-weight:400;font-feature-settings:'palt' 1;letter-spacing:0.400px;">!$A$2:$A$5,</span>
<span class="t" style="left:610.50px;top:232.50px;color:#1a1a1a;font-family:'Liberation Sans','Noto Sans CJK JP',sans-serif;font-size:16px;font-weight:300;letter-spacing:2.375px;">商品マスタ</span>
<span class="t" style="left:700.00px;top:234.10px;color:#1a1a1a;font-family:'Liberation Mono','Noto Sans CJK JP',monospace;font-size:16px;font-weight:400;font-feature-settings:'palt' 1;letter-spacing:0.500px;">!$B$2:$C$5)</span>
<span class="t" style="left:231.00px;top:230.20px;color:#3a3a3a;font-family:'Liberation Serif','Noto Serif CJK SC',serif;font-size:20px;font-weight:700;font-style:italic;font-feature-settings:'palt' 1;">fx</span>
<span class="t" style="left:155.36px;top:1009.00px;color:#242424;font-family:'Liberation Sans','Noto Sans CJK JP',sans-serif;font-size:16.5px;font-weight:400;font-feature-settings:'palt' 1;transform:scaleX(1.1381);">売上8月1-10日</span>
<span class="t" style="left:310.72px;top:1013.50px;color:#242424;font-family:'Liberation Sans','Noto Sans CJK JP',sans-serif;font-size:16.5px;font-weight:400;font-feature-settings:'palt' 1;transform:scaleX(0.9773);">商品マスタ</span>
<span class="t" style="left:16.50px;top:1046.75px;color:#3b3b3b;font-family:'Liberation Sans','Noto Sans CJK JP',sans-serif;font-size:14.5px;font-weight:400;font-feature-settings:'palt' 1;transform:scaleX(1.0263);">準備完了</span>
<span class="t" style="left:162.41px;top:1046.75px;color:#3b3b3b;font-family:'Liberation Sans','Noto Sans CJK JP',sans-serif;font-size:14.5px;font-weight:400;font-feature-settings:'palt' 1;transform:scaleX(0.8873);">アクセシビリティ: 問題ありません</span>
<span class="t" style="left:1851.89px;top:1046.00px;color:#3b3b3b;font-family:'Liberation Sans','Noto Sans CJK JP',sans-serif;font-size:14.5px;font-weight:400;font-feature-settings:'palt' 1;transform:scaleX(1.1111);">100%</span>
<span class="t" style="left:435.00px;top:106.70px;color:#3b3b3b;font-family:'Liberation Sans','Noto Sans CJK JP',sans-serif;font-size:21.5px;font-weight:400;font-feature-settings:'palt' 1;transform:scaleX(0.9333);">A</span>
<span class="t" style="left:469.00px;top:107.80px;color:#3b3b3b;font-family:'Liberation Sans','Noto Sans CJK JP',sans-serif;font-size:17.3px;font-weight:400;font-feature-settings:'palt' 1;transform:scaleX(0.9167);">A</span>
<span class="t" style="left:397.00px;top:145.30px;color:#3b3b3b;font-family:'Liberation Sans','Noto Sans CJK JP',sans-serif;font-size:19px;font-weight:400;font-feature-settings:'palt' 1;transform:scaleX(0.9231);">A</span>
<span class="t" style="left:452.68px;top:142.90px;color:#5a5a5a;font-family:'Liberation Sans','Noto Sans CJK JP',sans-serif;font-size:10px;font-weight:400;font-feature-settings:'palt' 1;transform:scaleX(0.9250);">ア</span>
<span class="t" style="left:452.20px;top:152.70px;color:#5a5a5a;font-family:'Liberation Sans','Noto Sans CJK JP',sans-serif;font-size:10.5px;font-weight:400;font-feature-settings:'palt' 1;">亜</span>
<span class="t" style="left:820.60px;top:148.50px;color:#444;font-family:'Liberation Sans','Noto Sans CJK JP',sans-serif;font-size:24.5px;font-weight:400;font-feature-settings:'palt' 1;transform:scaleX(0.8762);">%</span>
<span class="t" style="left:857.80px;top:128.50px;color:#3b3b3b;font-family:'Liberation Serif','Noto Serif CJK SC',serif;font-size:56px;font-weight:700;font-feature-settings:'palt' 1;transform:scaleX(0.8083);">,</span>
<span class="t" style="left:899.40px;top:142.30px;color:#444;font-family:'Liberation Sans','Noto Sans CJK JP',sans-serif;font-size:11.5px;font-weight:400;font-feature-settings:'palt' 1;transform:scaleX(1.0667);">0</span>
<span class="t" style="left:888.95px;top:152.80px;color:#444;font-family:'Liberation Sans','Noto Sans CJK JP',sans-serif;font-size:11.5px;font-weight:400;font-feature-settings:'palt' 1;transform:scaleX(1.0533);">.00</span>
<span class="t" style="left:922.00px;top:142.30px;color:#444;font-family:'Liberation Sans','Noto Sans CJK JP',sans-serif;font-size:11.5px;font-weight:400;font-feature-settings:'palt' 1;">.00</span>
<span class="t" style="left:928.02px;top:152.80px;color:#444;font-family:'Liberation Sans','Noto Sans CJK JP',sans-serif;font-size:11.5px;font-weight:400;font-feature-settings:'palt' 1;transform:scaleX(0.9778);">.0</span>
<span class="t" style="left:1326.87px;top:98.30px;color:#444;font-family:'Liberation Sans','Noto Sans CJK JP',sans-serif;font-size:24.5px;font-weight:400;font-feature-settings:'palt' 1;transform:scaleX(1.1286);">Σ</span>
<span class="t" style="left:1401.50px;top:98.50px;color:#2B88D8;font-family:'Liberation Sans','Noto Sans CJK JP',sans-serif;font-size:22px;font-weight:400;font-feature-settings:'palt' 1;transform:scaleX(0.8200);">A</span>
<span class="t" style="left:1401.50px;top:115.50px;color:#444;font-family:'Liberation Sans','Noto Sans CJK JP',sans-serif;font-size:21px;font-weight:400;font-feature-settings:'palt' 1;transform:scaleX(0.9462);">Z</span>
<span class="t" style="left:692.00px;top:103.50px;color:#444;font-family:'Liberation Sans','Noto Sans CJK JP',sans-serif;font-size:12.5px;font-weight:400;font-feature-settings:'palt' 1;transform:scaleX(1.0714);">ab</span>
<span class="t" style="left:692.00px;top:112.30px;color:#444;font-family:'Liberation Sans','Noto Sans CJK JP',sans-serif;font-size:12.5px;font-weight:400;font-feature-settings:'palt' 1;transform:scaleX(0.9333);">c</span>
<div class="abs" id="anno" style="left:735px;top:275px;width:70px;height:70px"><svg width="70" height="70" viewBox="0 0 70 70" style="overflow:visible"><defs><filter id="ol" x="-30%" y="-30%" width="170%" height="170%"><feMorphology in="SourceAlpha" operator="dilate" radius="2.7" result="d"/><feGaussianBlur in="d" stdDeviation=".5" result="d2"/><feComponentTransfer in="d2" result="d3"><feFuncA type="linear" slope="3" intercept="-.6"/></feComponentTransfer><feFlood flood-color="#fff" result="wf"/><feComposite in="wf" in2="d3" operator="in" result="w"/><feOffset in="d3" dx="1.6" dy="1.8" result="o"/><feGaussianBlur in="o" stdDeviation="1.5" result="bl"/><feFlood flood-color="#000" flood-opacity=".6" result="bf"/><feComposite in="bf" in2="bl" operator="in" result="sh"/><feMerge><feMergeNode in="sh"/><feMergeNode in="w"/><feMergeNode in="SourceGraphic"/></feMerge></filter></defs><text transform="translate(34.5 34.8) scale(1 .953)" x="0" y="20.8" text-anchor="middle" font-family="Liberation Sans, Noto Sans CJK JP, sans-serif" font-weight="500" font-size="54.3" fill="#FF0000" stroke="#FF0000" stroke-width="1" filter="url(#ol)">①</text></svg></div>
<div id="frame"></div>
</div></body></html>
